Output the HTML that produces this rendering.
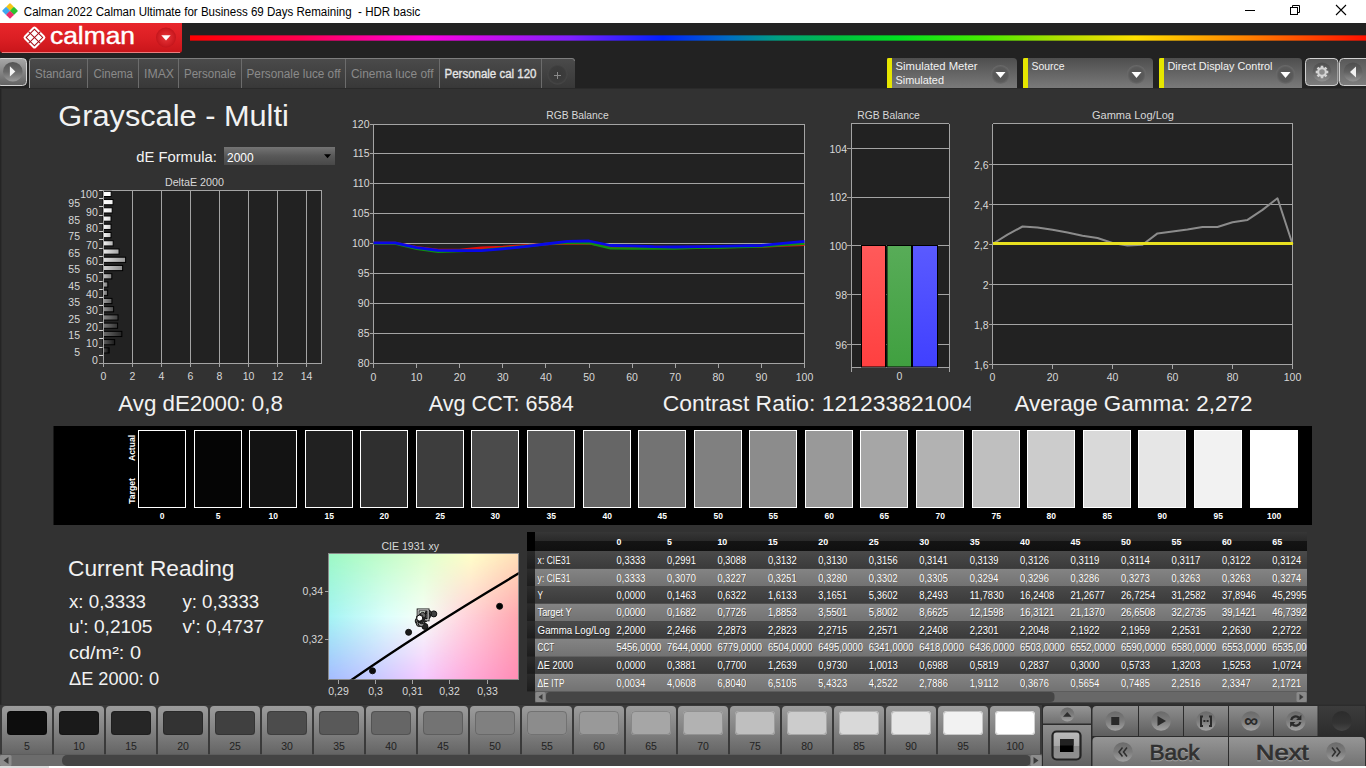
<!DOCTYPE html>
<html lang="en"><head><meta charset="utf-8"><title>Calman 2022 - HDR basic</title>
<style>
html,body{margin:0;padding:0;background:#323232;overflow:hidden;}
body{width:1366px;height:768px;}
svg{display:block;font-family:"Liberation Sans",sans-serif;}
</style></head><body>
<svg width="1366" height="768" viewBox="0 0 1366 768">
<defs>
<linearGradient id="gLogo" x1="0" y1="0" x2="0" y2="1"><stop offset="0" stop-color="#e8262b"/><stop offset="0.5" stop-color="#dc1f24"/><stop offset="1" stop-color="#c8151a"/></linearGradient>
<radialGradient id="gRedBtn" cx="0.5" cy="0.5" r="0.5"><stop offset="0" stop-color="#e8363a"/><stop offset="0.8" stop-color="#cf1c22"/><stop offset="1" stop-color="#c2151b"/></radialGradient>
<linearGradient id="gRain" x1="0" y1="0" x2="1" y2="0"><stop offset="0" stop-color="#ff0000"/><stop offset="0.094" stop-color="#ff0050"/><stop offset="0.2" stop-color="#ff00e0"/><stop offset="0.323" stop-color="#8020ff"/><stop offset="0.402" stop-color="#0020ff"/><stop offset="0.46" stop-color="#0070c0"/><stop offset="0.5" stop-color="#00a080"/><stop offset="0.553" stop-color="#00c040"/><stop offset="0.602" stop-color="#00e020"/><stop offset="0.676" stop-color="#48ec00"/><stop offset="0.74" stop-color="#b0e000"/><stop offset="0.804" stop-color="#ffe000"/><stop offset="0.9" stop-color="#ff8000"/><stop offset="1" stop-color="#ff1000"/></linearGradient>
<linearGradient id="gRainS" x1="0" y1="0" x2="0" y2="1"><stop offset="0" stop-color="#222"/><stop offset="0.25" stop-color="#222"/><stop offset="1" stop-color="#222"/></linearGradient>
<linearGradient id="gPlayB" x1="0" y1="0" x2="0" y2="1"><stop offset="0" stop-color="#a8a8a8"/><stop offset="1" stop-color="#626262"/></linearGradient>
<linearGradient id="gDarkC" x1="0" y1="0" x2="0" y2="1"><stop offset="0" stop-color="#545454"/><stop offset="0.5" stop-color="#6a6a6a"/><stop offset="1" stop-color="#9c9c9c"/></linearGradient>
<linearGradient id="gTab" x1="0" y1="0" x2="0" y2="1"><stop offset="0" stop-color="#4b4b4b"/><stop offset="1" stop-color="#383838"/></linearGradient>
<radialGradient id="gPlus" cx="0.5" cy="0.5" r="0.5"><stop offset="0" stop-color="#383838"/><stop offset="0.8" stop-color="#3c3c3c"/><stop offset="1" stop-color="#484848"/></radialGradient>
<linearGradient id="gBox" x1="0" y1="0" x2="0" y2="1"><stop offset="0" stop-color="#4e4e4e"/><stop offset="1" stop-color="#7a7a7a"/></linearGradient>
<radialGradient id="gBoxC" cx="0.5" cy="0.5" r="0.5"><stop offset="0" stop-color="#545454"/><stop offset="0.75" stop-color="#5a5a5a"/><stop offset="1" stop-color="#6c6c6c"/></radialGradient>
<linearGradient id="gGearB" x1="0" y1="0" x2="0" y2="1"><stop offset="0" stop-color="#585858"/><stop offset="1" stop-color="#7e7e7e"/></linearGradient>
<linearGradient id="gGearC" x1="0" y1="0" x2="0" y2="1"><stop offset="0" stop-color="#4e4e4e"/><stop offset="0.5" stop-color="#626262"/><stop offset="1" stop-color="#929292"/></linearGradient>
<linearGradient id="gDrop" x1="0" y1="0" x2="0" y2="1"><stop offset="0" stop-color="#747474"/><stop offset="0.5" stop-color="#585858"/><stop offset="1" stop-color="#484848"/></linearGradient>
<linearGradient id="gB100" x1="0" y1="0" x2="1" y2="0"><stop offset="0" stop-color="rgb(255,255,255)"/><stop offset="1" stop-color="rgb(255,255,255)"/></linearGradient>
<linearGradient id="gB95" x1="0" y1="0" x2="1" y2="0"><stop offset="0" stop-color="rgb(255,255,255)"/><stop offset="1" stop-color="rgb(242,242,242)"/></linearGradient>
<linearGradient id="gB90" x1="0" y1="0" x2="1" y2="0"><stop offset="0" stop-color="rgb(255,255,255)"/><stop offset="1" stop-color="rgb(230,230,230)"/></linearGradient>
<linearGradient id="gB85" x1="0" y1="0" x2="1" y2="0"><stop offset="0" stop-color="rgb(255,255,255)"/><stop offset="1" stop-color="rgb(217,217,217)"/></linearGradient>
<linearGradient id="gB80" x1="0" y1="0" x2="1" y2="0"><stop offset="0" stop-color="rgb(255,255,255)"/><stop offset="1" stop-color="rgb(204,204,204)"/></linearGradient>
<linearGradient id="gB75" x1="0" y1="0" x2="1" y2="0"><stop offset="0" stop-color="rgb(255,255,255)"/><stop offset="1" stop-color="rgb(191,191,191)"/></linearGradient>
<linearGradient id="gB70" x1="0" y1="0" x2="1" y2="0"><stop offset="0" stop-color="rgb(248,248,248)"/><stop offset="1" stop-color="rgb(178,178,178)"/></linearGradient>
<linearGradient id="gB65" x1="0" y1="0" x2="1" y2="0"><stop offset="0" stop-color="rgb(236,236,236)"/><stop offset="1" stop-color="rgb(166,166,166)"/></linearGradient>
<linearGradient id="gB60" x1="0" y1="0" x2="1" y2="0"><stop offset="0" stop-color="rgb(223,223,223)"/><stop offset="1" stop-color="rgb(153,153,153)"/></linearGradient>
<linearGradient id="gB55" x1="0" y1="0" x2="1" y2="0"><stop offset="0" stop-color="rgb(210,210,210)"/><stop offset="1" stop-color="rgb(140,140,140)"/></linearGradient>
<linearGradient id="gB50" x1="0" y1="0" x2="1" y2="0"><stop offset="0" stop-color="rgb(198,198,198)"/><stop offset="1" stop-color="rgb(128,128,128)"/></linearGradient>
<linearGradient id="gB45" x1="0" y1="0" x2="1" y2="0"><stop offset="0" stop-color="rgb(185,185,185)"/><stop offset="1" stop-color="rgb(115,115,115)"/></linearGradient>
<linearGradient id="gB40" x1="0" y1="0" x2="1" y2="0"><stop offset="0" stop-color="rgb(172,172,172)"/><stop offset="1" stop-color="rgb(102,102,102)"/></linearGradient>
<linearGradient id="gB35" x1="0" y1="0" x2="1" y2="0"><stop offset="0" stop-color="rgb(159,159,159)"/><stop offset="1" stop-color="rgb(89,89,89)"/></linearGradient>
<linearGradient id="gB30" x1="0" y1="0" x2="1" y2="0"><stop offset="0" stop-color="rgb(146,146,146)"/><stop offset="1" stop-color="rgb(76,76,76)"/></linearGradient>
<linearGradient id="gB25" x1="0" y1="0" x2="1" y2="0"><stop offset="0" stop-color="rgb(134,134,134)"/><stop offset="1" stop-color="rgb(64,64,64)"/></linearGradient>
<linearGradient id="gB20" x1="0" y1="0" x2="1" y2="0"><stop offset="0" stop-color="rgb(121,121,121)"/><stop offset="1" stop-color="rgb(51,51,51)"/></linearGradient>
<linearGradient id="gB15" x1="0" y1="0" x2="1" y2="0"><stop offset="0" stop-color="rgb(108,108,108)"/><stop offset="1" stop-color="rgb(38,38,38)"/></linearGradient>
<linearGradient id="gB10" x1="0" y1="0" x2="1" y2="0"><stop offset="0" stop-color="rgb(96,96,96)"/><stop offset="1" stop-color="rgb(26,26,26)"/></linearGradient>
<linearGradient id="gB5" x1="0" y1="0" x2="1" y2="0"><stop offset="0" stop-color="rgb(83,83,83)"/><stop offset="1" stop-color="rgb(13,13,13)"/></linearGradient>
<linearGradient id="gBr" x1="0" y1="0" x2="0" y2="1"><stop offset="0" stop-color="#ff5a5a"/><stop offset="1" stop-color="#ff4040"/></linearGradient>
<linearGradient id="gBg" x1="0" y1="0" x2="0" y2="1"><stop offset="0" stop-color="#58ac58"/><stop offset="1" stop-color="#40a040"/></linearGradient>
<linearGradient id="gBb" x1="0" y1="0" x2="0" y2="1"><stop offset="0" stop-color="#5a5aff"/><stop offset="1" stop-color="#4040ff"/></linearGradient>
<linearGradient id="gCt" x1="0" y1="0" x2="1" y2="0"><stop offset="0" stop-color="#9cf8c4"/><stop offset="0.5" stop-color="#dcffcc"/><stop offset="0.75" stop-color="#ffffc8"/><stop offset="1" stop-color="#ffe0b8"/></linearGradient>
<linearGradient id="gCm" x1="0" y1="0" x2="1" y2="0"><stop offset="0" stop-color="#a4f4f4"/><stop offset="0.3" stop-color="#dcfffc"/><stop offset="0.5" stop-color="#f8fff8"/><stop offset="0.7" stop-color="#ffd8e0"/><stop offset="1" stop-color="#ffa8b0"/></linearGradient>
<linearGradient id="gCb" x1="0" y1="0" x2="1" y2="0"><stop offset="0" stop-color="#a4bcff"/><stop offset="0.25" stop-color="#c8c8ff"/><stop offset="0.5" stop-color="#f4c8ff"/><stop offset="0.75" stop-color="#ffa8d8"/><stop offset="1" stop-color="#ff8cb4"/></linearGradient>
<linearGradient id="gMt" x1="0" y1="0" x2="0" y2="1"><stop offset="0" stop-color="#fff"/><stop offset="0.5" stop-color="#000"/><stop offset="1" stop-color="#000"/></linearGradient>
<linearGradient id="gMb" x1="0" y1="0" x2="0" y2="1"><stop offset="0" stop-color="#000"/><stop offset="0.5" stop-color="#000"/><stop offset="1" stop-color="#fff"/></linearGradient>
<mask id="mTop" maskUnits="userSpaceOnUse" x="328.5" y="553.5" width="190.0" height="126.0"><rect x="328.5" y="553.5" width="190.0" height="126.0" fill="url(#gMt)"/></mask>
<mask id="mBot" maskUnits="userSpaceOnUse" x="328.5" y="553.5" width="190.0" height="126.0"><rect x="328.5" y="553.5" width="190.0" height="126.0" fill="url(#gMb)"/></mask>
<linearGradient id="gTh" x1="0" y1="0" x2="0" y2="1"><stop offset="0" stop-color="#363636"/><stop offset="0.45" stop-color="#2a2a2a"/><stop offset="0.5" stop-color="#141414"/><stop offset="1" stop-color="#101010"/></linearGradient>
<linearGradient id="gTd" x1="0" y1="0" x2="0" y2="1"><stop offset="0" stop-color="#4a4a4a"/><stop offset="1" stop-color="#3a3a3a"/></linearGradient>
<linearGradient id="gTl" x1="0" y1="0" x2="0" y2="1"><stop offset="0" stop-color="#848484"/><stop offset="1" stop-color="#727272"/></linearGradient>
<linearGradient id="gTs" x1="0" y1="0" x2="0" y2="1"><stop offset="0" stop-color="#2a2a2a"/><stop offset="1" stop-color="#1c1c1c"/></linearGradient>
<linearGradient id="gSw" x1="0" y1="0" x2="0" y2="1"><stop offset="0" stop-color="#9c9c9c"/><stop offset="0.5" stop-color="#828282"/><stop offset="1" stop-color="#646464"/></linearGradient>
<linearGradient id="gBt" x1="0" y1="0" x2="0" y2="1"><stop offset="0" stop-color="#8e8e8e"/><stop offset="1" stop-color="#5e5e5e"/></linearGradient>
<linearGradient id="gBt2" x1="0" y1="0" x2="0" y2="1"><stop offset="0" stop-color="#969696"/><stop offset="1" stop-color="#707070"/></linearGradient>
<linearGradient id="gCtl" x1="0" y1="0" x2="0" y2="1"><stop offset="0" stop-color="#6a6a6a"/><stop offset="0.5" stop-color="#7c7c7c"/><stop offset="1" stop-color="#a2a2a2"/></linearGradient>
<linearGradient id="gGloss" x1="0" y1="0" x2="0" y2="1"><stop offset="0" stop-color="#bcbcbc"/><stop offset="0.5" stop-color="#a8a8a8"/><stop offset="0.5" stop-color="#8a8a8a"/><stop offset="1" stop-color="#909090"/></linearGradient>
<linearGradient id="gLedBg" x1="0" y1="0" x2="0" y2="1"><stop offset="0" stop-color="#3c3c3c"/><stop offset="1" stop-color="#2c2c2c"/></linearGradient>
<linearGradient id="gLed" x1="0" y1="0" x2="0" y2="1"><stop offset="0" stop-color="#2c2c2c"/><stop offset="0.6" stop-color="#333"/><stop offset="1" stop-color="#464646"/></linearGradient>
</defs>
<rect x="0" y="0" width="1366" height="768" fill="#323232" />
<rect x="0" y="0" width="1366" height="23" fill="#ffffff" />
<rect x="0" y="88" width="1.3" height="617" fill="#242424" />
<g transform="translate(10,10.9)"><rect x="-2.9" y="-2.9" width="5.8" height="5.8" rx="0.8" fill="#f5c518" transform="translate(0,-3.9) rotate(45)"/><rect x="-2.9" y="-2.9" width="5.8" height="5.8" rx="0.8" fill="#3fa9f0" transform="translate(-3.9,0) rotate(45)"/><rect x="-2.9" y="-2.9" width="5.8" height="5.8" rx="0.8" fill="#2fc22f" transform="translate(3.9,0) rotate(45)"/><rect x="-2.9" y="-2.9" width="5.8" height="5.8" rx="0.8" fill="#ea2f6c" transform="translate(0,3.9) rotate(45)"/></g>
<text x="23.8" y="15.8" font-size="12.5" fill="#000" textLength="396.5" lengthAdjust="spacingAndGlyphs" xml:space="preserve">Calman 2022 Calman Ultimate for Business 69 Days Remaining  - HDR basic</text>
<line x1="1245" y1="10.5" x2="1255" y2="10.5" stroke="#000" stroke-width="1"  shape-rendering="crispEdges"/>
<rect x="1290.5" y="7.5" width="7" height="7" fill="none" stroke="#000" stroke-width="1"/>
<path d="M1292.5 7.5 V5.5 H1299.5 V12.5 H1297.5" fill="none" stroke="#000" stroke-width="1"/>
<path d="M1336 5 L1346 15 M1346 5 L1336 15" stroke="#000" stroke-width="1.1" fill="none"/>
<rect x="0" y="23" width="1366" height="65" fill="#222222" />
<path d="M0 23 H182 V50 Q182 53 179 53 H3 Q0 53 0 50 Z" fill="url(#gLogo)"/>
<path d="M2 52.5 H180" stroke="#f09090" stroke-width="1" opacity="0.85"/>
<g transform="translate(34.45,37.5) rotate(45)"><rect x="-8.4" y="-8.4" width="16.8" height="16.8" rx="2.4" fill="#fff"/><rect x="-5.85" y="-5.85" width="11.7" height="11.7" fill="none" stroke="#a80f18" stroke-width="1"/><line x1="0" y1="-8.4" x2="0" y2="8.4" stroke="#a80f18" stroke-width="1"/><line x1="-8.4" y1="0" x2="8.4" y2="0" stroke="#a80f18" stroke-width="1"/></g>
<text x="50" y="44.2" font-size="23" fill="#ffffff" textLength="85" lengthAdjust="spacingAndGlyphs" stroke="#fff" stroke-width="0.4">calman</text>
<circle cx="166" cy="37.5" r="10" fill="url(#gRedBtn)"/>
<path d="M161.3 35.2 H170.7 L166 40.6 Z" fill="#fff"/>
<rect x="190" y="35" width="1176" height="6" fill="url(#gRain)" />
<rect x="190" y="35" width="1176" height="1" fill="#222" opacity="0.35"/>
<rect x="190" y="40" width="1176" height="1" fill="#222" opacity="0.35"/>
<rect x="-3" y="58.5" width="29.5" height="27" fill="url(#gPlayB)" rx="4" stroke="#d4d4d4" stroke-width="1" />
<circle cx="12.8" cy="71.8" r="9.8" fill="url(#gDarkC)"/>
<path d="M9.9 66.3 L15.3 71.4 L9.9 76.5 Z" fill="#f4f4f4"/>
<path d="M29 88 V61 Q29 58 32 58 H572 Q575 58 575 61 V88 Z" fill="url(#gTab)"/>
<path d="M29.5 88 V61 Q29.5 58.5 32 58.5 H572 Q574.5 58.5 574.5 61" fill="none" stroke="#7d7d7d" stroke-width="1"/>
<line x1="29.5" y1="61" x2="29.5" y2="88" stroke="#a0a0a0" stroke-width="1"  shape-rendering="crispEdges"/>
<line x1="87.5" y1="59" x2="87.5" y2="88" stroke="#6c6c6c" stroke-width="1"  shape-rendering="crispEdges"/>
<line x1="138.5" y1="59" x2="138.5" y2="88" stroke="#6c6c6c" stroke-width="1"  shape-rendering="crispEdges"/>
<line x1="178.5" y1="59" x2="178.5" y2="88" stroke="#6c6c6c" stroke-width="1"  shape-rendering="crispEdges"/>
<line x1="241.5" y1="59" x2="241.5" y2="88" stroke="#6c6c6c" stroke-width="1"  shape-rendering="crispEdges"/>
<line x1="345.5" y1="59" x2="345.5" y2="88" stroke="#6c6c6c" stroke-width="1"  shape-rendering="crispEdges"/>
<line x1="439.5" y1="59" x2="439.5" y2="88" stroke="#6c6c6c" stroke-width="1"  shape-rendering="crispEdges"/>
<line x1="541.5" y1="59" x2="541.5" y2="88" stroke="#6c6c6c" stroke-width="1"  shape-rendering="crispEdges"/>
<text x="35" y="77.8" font-size="12.5" fill="#8c8c8c" textLength="46.8" lengthAdjust="spacingAndGlyphs" >Standard</text>
<text x="93.5" y="77.8" font-size="12.5" fill="#8a8a8a" textLength="39.5" lengthAdjust="spacingAndGlyphs" >Cinema</text>
<text x="144" y="77.8" font-size="12.5" fill="#8a8a8a" textLength="30" lengthAdjust="spacingAndGlyphs" >IMAX</text>
<text x="184" y="77.8" font-size="12.5" fill="#8a8a8a" textLength="52" lengthAdjust="spacingAndGlyphs" >Personale</text>
<text x="246.5" y="77.8" font-size="12.5" fill="#8a8a8a" textLength="94.0" lengthAdjust="spacingAndGlyphs" >Personale luce off</text>
<text x="351" y="77.8" font-size="12.5" fill="#8a8a8a" textLength="82.5" lengthAdjust="spacingAndGlyphs" >Cinema luce off</text>
<text x="444.5" y="77.8" font-size="12.5" fill="#e6e6e6" textLength="92.0" lengthAdjust="spacingAndGlyphs" stroke="#e6e6e6" stroke-width="0.35">Personale cal 120</text>
<circle cx="557.5" cy="74.5" r="10" fill="url(#gPlus)"/>
<path d="M554 75.5 H561 M557.5 72 V79" stroke="#8a8a8a" stroke-width="1"/>
<line x1="0" y1="88.5" x2="1366" y2="88.5" stroke="#2a2a2a" stroke-width="1"  shape-rendering="crispEdges"/>
<path d="M887 88 V58 H1013 Q1017 58 1017 62 V88 Z" fill="url(#gBox)"/>
<path d="M887 88 V59.5 Q887 58 888.5 58 H892 V88 Z" fill="#e6e600"/>
<text x="895.5" y="70.3" font-size="11.5" fill="#f2f2f2" textLength="82" lengthAdjust="spacingAndGlyphs" >Simulated Meter</text>
<text x="895.5" y="84.2" font-size="11.5" fill="#f2f2f2" textLength="48.5" lengthAdjust="spacingAndGlyphs" >Simulated</text>
<circle cx="1000.5" cy="74.5" r="9.5" fill="url(#gBoxC)"/>
<path d="M995.5 72 H1005.5 L1000.5 78 Z" fill="#fff"/>
<path d="M1023 88 V58 H1149 Q1153 58 1153 62 V88 Z" fill="url(#gBox)"/>
<path d="M1023 88 V59.5 Q1023 58 1024.5 58 H1028 V88 Z" fill="#e6e600"/>
<text x="1031.5" y="70.3" font-size="11.5" fill="#f2f2f2" textLength="33" lengthAdjust="spacingAndGlyphs" >Source</text>
<circle cx="1136.5" cy="74.5" r="9.5" fill="url(#gBoxC)"/>
<path d="M1131.5 72 H1141.5 L1136.5 78 Z" fill="#fff"/>
<path d="M1159 88 V58 H1298 Q1302 58 1302 62 V88 Z" fill="url(#gBox)"/>
<path d="M1159 88 V59.5 Q1159 58 1160.5 58 H1164 V88 Z" fill="#e6e600"/>
<text x="1167.5" y="70.3" font-size="11.5" fill="#f2f2f2" textLength="105" lengthAdjust="spacingAndGlyphs" >Direct Display Control</text>
<circle cx="1285.5" cy="74.5" r="9.5" fill="url(#gBoxC)"/>
<path d="M1280.5 72 H1290.5 L1285.5 78 Z" fill="#fff"/>
<rect x="1305.5" y="58.5" width="32.5" height="27" fill="url(#gGearB)" rx="4" stroke="#d0d0d0" stroke-width="1" />
<rect x="1339.5" y="58.5" width="32" height="27" fill="url(#gGearB)" rx="4" stroke="#d0d0d0" stroke-width="1" />
<circle cx="1322" cy="72" r="9.5" fill="url(#gGearC)"/>
<circle cx="1353" cy="72" r="9.5" fill="url(#gGearC)"/>
<g transform="translate(1322,72)"><rect x="-1.3" y="-6.3" width="2.6" height="3" fill="#d4d4d4" transform="rotate(0)"/><rect x="-1.3" y="-6.3" width="2.6" height="3" fill="#d4d4d4" transform="rotate(45)"/><rect x="-1.3" y="-6.3" width="2.6" height="3" fill="#d4d4d4" transform="rotate(90)"/><rect x="-1.3" y="-6.3" width="2.6" height="3" fill="#d4d4d4" transform="rotate(135)"/><rect x="-1.3" y="-6.3" width="2.6" height="3" fill="#d4d4d4" transform="rotate(180)"/><rect x="-1.3" y="-6.3" width="2.6" height="3" fill="#d4d4d4" transform="rotate(225)"/><rect x="-1.3" y="-6.3" width="2.6" height="3" fill="#d4d4d4" transform="rotate(270)"/><rect x="-1.3" y="-6.3" width="2.6" height="3" fill="#d4d4d4" transform="rotate(315)"/><circle r="3.8" fill="#8c8c8c" stroke="#d4d4d4" stroke-width="2"/></g>
<path d="M1356 66.5 L1350 72 L1356 77.5 Z" fill="#f0f0f0"/>
<text x="58.3" y="126" font-size="29" fill="#f2f2f2" textLength="230.5" lengthAdjust="spacingAndGlyphs" >Grayscale - Multi</text>
<text x="136.2" y="162" font-size="15.5" fill="#f2f2f2" textLength="80.6" lengthAdjust="spacingAndGlyphs" >dE Formula:</text>
<rect x="224" y="147" width="111" height="18" fill="url(#gDrop)" />
<text x="227" y="161.8" font-size="12" fill="#ffffff" textLength="26.6" lengthAdjust="spacingAndGlyphs" >2000</text>
<path d="M324 154.3 H331 L327.5 158.2 Z" fill="#000"/>
<text x="194.4" y="185.5" font-size="10.5" fill="#d8d8d8" text-anchor="middle" textLength="59" lengthAdjust="spacingAndGlyphs" >DeltaE 2000</text>
<rect x="103.5" y="190" width="218.0" height="173" fill="#222222" />
<line x1="103.5" y1="190" x2="103.5" y2="367" stroke="#a4a4a4" stroke-width="1"  shape-rendering="crispEdges"/>
<text x="103.5" y="379.8" font-size="10.5" fill="#d8d8d8" text-anchor="middle" >0</text>
<line x1="132.5" y1="190" x2="132.5" y2="367" stroke="#a4a4a4" stroke-width="1"  shape-rendering="crispEdges"/>
<text x="132.5" y="379.8" font-size="10.5" fill="#d8d8d8" text-anchor="middle" >2</text>
<line x1="161.5" y1="190" x2="161.5" y2="367" stroke="#a4a4a4" stroke-width="1"  shape-rendering="crispEdges"/>
<text x="161.5" y="379.8" font-size="10.5" fill="#d8d8d8" text-anchor="middle" >4</text>
<line x1="190.5" y1="190" x2="190.5" y2="367" stroke="#a4a4a4" stroke-width="1"  shape-rendering="crispEdges"/>
<text x="190.5" y="379.8" font-size="10.5" fill="#d8d8d8" text-anchor="middle" >6</text>
<line x1="219.5" y1="190" x2="219.5" y2="367" stroke="#a4a4a4" stroke-width="1"  shape-rendering="crispEdges"/>
<text x="219.5" y="379.8" font-size="10.5" fill="#d8d8d8" text-anchor="middle" >8</text>
<line x1="248.5" y1="190" x2="248.5" y2="367" stroke="#a4a4a4" stroke-width="1"  shape-rendering="crispEdges"/>
<text x="248.5" y="379.8" font-size="10.5" fill="#d8d8d8" text-anchor="middle" >10</text>
<line x1="277.5" y1="190" x2="277.5" y2="367" stroke="#a4a4a4" stroke-width="1"  shape-rendering="crispEdges"/>
<text x="277.5" y="379.8" font-size="10.5" fill="#d8d8d8" text-anchor="middle" >12</text>
<line x1="306.5" y1="190" x2="306.5" y2="367" stroke="#a4a4a4" stroke-width="1"  shape-rendering="crispEdges"/>
<text x="306.5" y="379.8" font-size="10.5" fill="#d8d8d8" text-anchor="middle" >14</text>
<line x1="103.5" y1="190" x2="321.5" y2="190" stroke="#a4a4a4" stroke-width="1"  shape-rendering="crispEdges"/>
<line x1="321.5" y1="190" x2="321.5" y2="363" stroke="#a4a4a4" stroke-width="1"  shape-rendering="crispEdges"/>
<line x1="98.5" y1="363" x2="321.5" y2="363" stroke="#a4a4a4" stroke-width="1"  shape-rendering="crispEdges"/>
<line x1="98.5" y1="190.5" x2="103.5" y2="190.5" stroke="#d4d4d4" stroke-width="1"  shape-rendering="crispEdges"/>
<text x="97.8" y="198.2" font-size="10.5" fill="#d8d8d8" text-anchor="end" >100</text>
<rect x="103.0" y="191.30" width="8.19" height="5.2" fill="url(#gB100)" stroke="#000" stroke-width="1"/>
<line x1="98.5" y1="198.5" x2="103.5" y2="198.5" stroke="#d4d4d4" stroke-width="1"  shape-rendering="crispEdges"/>
<text x="80" y="207.3" font-size="10.5" fill="#d8d8d8" text-anchor="end" >95</text>
<rect x="103.0" y="199.54" width="10.07" height="5.2" fill="url(#gB95)" stroke="#000" stroke-width="1"/>
<line x1="98.5" y1="206.5" x2="103.5" y2="206.5" stroke="#d4d4d4" stroke-width="1"  shape-rendering="crispEdges"/>
<text x="97.8" y="215.6" font-size="10.5" fill="#d8d8d8" text-anchor="end" >90</text>
<rect x="103.0" y="207.78" width="9.20" height="5.2" fill="url(#gB90)" stroke="#000" stroke-width="1"/>
<line x1="98.5" y1="215.5" x2="103.5" y2="215.5" stroke="#d4d4d4" stroke-width="1"  shape-rendering="crispEdges"/>
<text x="80" y="223.8" font-size="10.5" fill="#d8d8d8" text-anchor="end" >85</text>
<rect x="103.0" y="216.01" width="8.04" height="5.2" fill="url(#gB85)" stroke="#000" stroke-width="1"/>
<line x1="98.5" y1="223.5" x2="103.5" y2="223.5" stroke="#d4d4d4" stroke-width="1"  shape-rendering="crispEdges"/>
<text x="97.8" y="232.1" font-size="10.5" fill="#d8d8d8" text-anchor="end" >80</text>
<rect x="103.0" y="224.25" width="8.04" height="5.2" fill="url(#gB80)" stroke="#000" stroke-width="1"/>
<line x1="98.5" y1="231.5" x2="103.5" y2="231.5" stroke="#d4d4d4" stroke-width="1"  shape-rendering="crispEdges"/>
<text x="80" y="240.3" font-size="10.5" fill="#d8d8d8" text-anchor="end" >75</text>
<rect x="103.0" y="232.49" width="8.04" height="5.2" fill="url(#gB75)" stroke="#000" stroke-width="1"/>
<line x1="98.5" y1="239.5" x2="103.5" y2="239.5" stroke="#d4d4d4" stroke-width="1"  shape-rendering="crispEdges"/>
<text x="97.8" y="248.5" font-size="10.5" fill="#d8d8d8" text-anchor="end" >70</text>
<rect x="103.0" y="240.73" width="10.21" height="5.2" fill="url(#gB70)" stroke="#000" stroke-width="1"/>
<line x1="98.5" y1="248.5" x2="103.5" y2="248.5" stroke="#d4d4d4" stroke-width="1"  shape-rendering="crispEdges"/>
<text x="80" y="256.8" font-size="10.5" fill="#d8d8d8" text-anchor="end" >65</text>
<rect x="103.0" y="248.97" width="16.05" height="5.2" fill="url(#gB65)" stroke="#000" stroke-width="1"/>
<line x1="98.5" y1="256.5" x2="103.5" y2="256.5" stroke="#d4d4d4" stroke-width="1"  shape-rendering="crispEdges"/>
<text x="97.8" y="265.0" font-size="10.5" fill="#d8d8d8" text-anchor="end" >60</text>
<rect x="103.0" y="257.20" width="22.62" height="5.2" fill="url(#gB60)" stroke="#000" stroke-width="1"/>
<line x1="98.5" y1="264.5" x2="103.5" y2="264.5" stroke="#d4d4d4" stroke-width="1"  shape-rendering="crispEdges"/>
<text x="80" y="273.2" font-size="10.5" fill="#d8d8d8" text-anchor="end" >55</text>
<rect x="103.0" y="265.44" width="19.64" height="5.2" fill="url(#gB55)" stroke="#000" stroke-width="1"/>
<line x1="98.5" y1="272.5" x2="103.5" y2="272.5" stroke="#d4d4d4" stroke-width="1"  shape-rendering="crispEdges"/>
<text x="97.8" y="281.5" font-size="10.5" fill="#d8d8d8" text-anchor="end" >50</text>
<rect x="103.0" y="273.68" width="8.81" height="5.2" fill="url(#gB50)" stroke="#000" stroke-width="1"/>
<line x1="98.5" y1="281.5" x2="103.5" y2="281.5" stroke="#d4d4d4" stroke-width="1"  shape-rendering="crispEdges"/>
<text x="80" y="289.7" font-size="10.5" fill="#d8d8d8" text-anchor="end" >45</text>
<rect x="103.0" y="281.92" width="4.85" height="5.2" fill="url(#gB45)" stroke="#000" stroke-width="1"/>
<line x1="98.5" y1="289.5" x2="103.5" y2="289.5" stroke="#d4d4d4" stroke-width="1"  shape-rendering="crispEdges"/>
<text x="97.8" y="298.0" font-size="10.5" fill="#d8d8d8" text-anchor="end" >40</text>
<rect x="103.0" y="290.16" width="4.61" height="5.2" fill="url(#gB40)" stroke="#000" stroke-width="1"/>
<line x1="98.5" y1="297.5" x2="103.5" y2="297.5" stroke="#d4d4d4" stroke-width="1"  shape-rendering="crispEdges"/>
<text x="80" y="306.2" font-size="10.5" fill="#d8d8d8" text-anchor="end" >35</text>
<rect x="103.0" y="298.40" width="8.94" height="5.2" fill="url(#gB35)" stroke="#000" stroke-width="1"/>
<line x1="98.5" y1="305.5" x2="103.5" y2="305.5" stroke="#d4d4d4" stroke-width="1"  shape-rendering="crispEdges"/>
<text x="97.8" y="314.4" font-size="10.5" fill="#d8d8d8" text-anchor="end" >30</text>
<rect x="103.0" y="306.63" width="10.63" height="5.2" fill="url(#gB30)" stroke="#000" stroke-width="1"/>
<line x1="98.5" y1="314.5" x2="103.5" y2="314.5" stroke="#d4d4d4" stroke-width="1"  shape-rendering="crispEdges"/>
<text x="80" y="322.7" font-size="10.5" fill="#d8d8d8" text-anchor="end" >25</text>
<rect x="103.0" y="314.87" width="15.02" height="5.2" fill="url(#gB25)" stroke="#000" stroke-width="1"/>
<line x1="98.5" y1="322.5" x2="103.5" y2="322.5" stroke="#d4d4d4" stroke-width="1"  shape-rendering="crispEdges"/>
<text x="97.8" y="330.9" font-size="10.5" fill="#d8d8d8" text-anchor="end" >20</text>
<rect x="103.0" y="323.11" width="14.61" height="5.2" fill="url(#gB20)" stroke="#000" stroke-width="1"/>
<line x1="98.5" y1="330.5" x2="103.5" y2="330.5" stroke="#d4d4d4" stroke-width="1"  shape-rendering="crispEdges"/>
<text x="80" y="339.1" font-size="10.5" fill="#d8d8d8" text-anchor="end" >15</text>
<rect x="103.0" y="331.35" width="18.83" height="5.2" fill="url(#gB15)" stroke="#000" stroke-width="1"/>
<line x1="98.5" y1="338.5" x2="103.5" y2="338.5" stroke="#d4d4d4" stroke-width="1"  shape-rendering="crispEdges"/>
<text x="97.8" y="347.4" font-size="10.5" fill="#d8d8d8" text-anchor="end" >10</text>
<rect x="103.0" y="339.59" width="11.67" height="5.2" fill="url(#gB10)" stroke="#000" stroke-width="1"/>
<line x1="98.5" y1="347.5" x2="103.5" y2="347.5" stroke="#d4d4d4" stroke-width="1"  shape-rendering="crispEdges"/>
<text x="80" y="355.6" font-size="10.5" fill="#d8d8d8" text-anchor="end" >5</text>
<rect x="103.0" y="347.82" width="6.13" height="5.2" fill="url(#gB5)" stroke="#000" stroke-width="1"/>
<line x1="98.5" y1="355.5" x2="103.5" y2="355.5" stroke="#d4d4d4" stroke-width="1"  shape-rendering="crispEdges"/>
<text x="97.8" y="363.9" font-size="10.5" fill="#d8d8d8" text-anchor="end" >0</text>
<line x1="103.5" y1="190" x2="103.5" y2="363" stroke="#a4a4a4" stroke-width="1"  shape-rendering="crispEdges"/>
<text x="577.5" y="119" font-size="10.5" fill="#d8d8d8" text-anchor="middle" textLength="62.5" lengthAdjust="spacingAndGlyphs" >RGB Balance</text>
<rect x="373.5" y="124.5" width="431.0" height="239.0" fill="#222222" />
<line x1="369.5" y1="124.5" x2="804.5" y2="124.5" stroke="#a4a4a4" stroke-width="1"  shape-rendering="crispEdges"/>
<text x="369.5" y="128.3" font-size="10.5" fill="#d8d8d8" text-anchor="end" >120</text>
<line x1="369.5" y1="153.5" x2="804.5" y2="153.5" stroke="#a4a4a4" stroke-width="1"  shape-rendering="crispEdges"/>
<text x="369.5" y="157.3" font-size="10.5" fill="#d8d8d8" text-anchor="end" >115</text>
<line x1="369.5" y1="183.5" x2="804.5" y2="183.5" stroke="#a4a4a4" stroke-width="1"  shape-rendering="crispEdges"/>
<text x="369.5" y="187.3" font-size="10.5" fill="#d8d8d8" text-anchor="end" >110</text>
<line x1="369.5" y1="213.5" x2="804.5" y2="213.5" stroke="#a4a4a4" stroke-width="1"  shape-rendering="crispEdges"/>
<text x="369.5" y="217.3" font-size="10.5" fill="#d8d8d8" text-anchor="end" >105</text>
<line x1="369.5" y1="243.5" x2="804.5" y2="243.5" stroke="#a4a4a4" stroke-width="1"  shape-rendering="crispEdges"/>
<text x="369.5" y="247.3" font-size="10.5" fill="#d8d8d8" text-anchor="end" >100</text>
<line x1="369.5" y1="273.5" x2="804.5" y2="273.5" stroke="#a4a4a4" stroke-width="1"  shape-rendering="crispEdges"/>
<text x="369.5" y="277.3" font-size="10.5" fill="#d8d8d8" text-anchor="end" >95</text>
<line x1="369.5" y1="303.5" x2="804.5" y2="303.5" stroke="#a4a4a4" stroke-width="1"  shape-rendering="crispEdges"/>
<text x="369.5" y="307.3" font-size="10.5" fill="#d8d8d8" text-anchor="end" >90</text>
<line x1="369.5" y1="333.5" x2="804.5" y2="333.5" stroke="#a4a4a4" stroke-width="1"  shape-rendering="crispEdges"/>
<text x="369.5" y="337.3" font-size="10.5" fill="#d8d8d8" text-anchor="end" >85</text>
<line x1="369.5" y1="363.5" x2="804.5" y2="363.5" stroke="#a4a4a4" stroke-width="1"  shape-rendering="crispEdges"/>
<text x="369.5" y="367.3" font-size="10.5" fill="#d8d8d8" text-anchor="end" >80</text>
<line x1="373.5" y1="363.5" x2="373.5" y2="367.5" stroke="#a4a4a4" stroke-width="1"  shape-rendering="crispEdges"/>
<text x="373.5" y="381" font-size="10.5" fill="#d8d8d8" text-anchor="middle" >0</text>
<line x1="416.6" y1="363.5" x2="416.6" y2="367.5" stroke="#a4a4a4" stroke-width="1"  shape-rendering="crispEdges"/>
<text x="416.6" y="381" font-size="10.5" fill="#d8d8d8" text-anchor="middle" >10</text>
<line x1="459.7" y1="363.5" x2="459.7" y2="367.5" stroke="#a4a4a4" stroke-width="1"  shape-rendering="crispEdges"/>
<text x="459.7" y="381" font-size="10.5" fill="#d8d8d8" text-anchor="middle" >20</text>
<line x1="502.79999999999995" y1="363.5" x2="502.79999999999995" y2="367.5" stroke="#a4a4a4" stroke-width="1"  shape-rendering="crispEdges"/>
<text x="502.79999999999995" y="381" font-size="10.5" fill="#d8d8d8" text-anchor="middle" >30</text>
<line x1="545.9" y1="363.5" x2="545.9" y2="367.5" stroke="#a4a4a4" stroke-width="1"  shape-rendering="crispEdges"/>
<text x="545.9" y="381" font-size="10.5" fill="#d8d8d8" text-anchor="middle" >40</text>
<line x1="589.0" y1="363.5" x2="589.0" y2="367.5" stroke="#a4a4a4" stroke-width="1"  shape-rendering="crispEdges"/>
<text x="589.0" y="381" font-size="10.5" fill="#d8d8d8" text-anchor="middle" >50</text>
<line x1="632.0999999999999" y1="363.5" x2="632.0999999999999" y2="367.5" stroke="#a4a4a4" stroke-width="1"  shape-rendering="crispEdges"/>
<text x="632.0999999999999" y="381" font-size="10.5" fill="#d8d8d8" text-anchor="middle" >60</text>
<line x1="675.2" y1="363.5" x2="675.2" y2="367.5" stroke="#a4a4a4" stroke-width="1"  shape-rendering="crispEdges"/>
<text x="675.2" y="381" font-size="10.5" fill="#d8d8d8" text-anchor="middle" >70</text>
<line x1="718.3" y1="363.5" x2="718.3" y2="367.5" stroke="#a4a4a4" stroke-width="1"  shape-rendering="crispEdges"/>
<text x="718.3" y="381" font-size="10.5" fill="#d8d8d8" text-anchor="middle" >80</text>
<line x1="761.4" y1="363.5" x2="761.4" y2="367.5" stroke="#a4a4a4" stroke-width="1"  shape-rendering="crispEdges"/>
<text x="761.4" y="381" font-size="10.5" fill="#d8d8d8" text-anchor="middle" >90</text>
<line x1="804.5" y1="363.5" x2="804.5" y2="367.5" stroke="#a4a4a4" stroke-width="1"  shape-rendering="crispEdges"/>
<text x="804.5" y="381" font-size="10.5" fill="#d8d8d8" text-anchor="middle" >100</text>
<line x1="373.5" y1="124.5" x2="373.5" y2="363.5" stroke="#a4a4a4" stroke-width="1"  shape-rendering="crispEdges"/>
<line x1="804.5" y1="124.5" x2="804.5" y2="363.5" stroke="#a4a4a4" stroke-width="1"  shape-rendering="crispEdges"/>
<polyline points="373.5,243.1 395.1,243.1 416.6,247.3 438.1,250.0 459.7,250.0 481.2,247.9 502.8,247.0 524.4,245.5 545.9,244.0 567.5,243.4 589.0,243.1 610.5,246.7 632.1,246.7 653.6,247.0 675.2,247.3 696.8,247.0 718.3,247.0 739.8,246.7 761.4,246.4 783.0,245.5 804.5,244.6" fill="none" stroke="#e01010" stroke-width="2.6" stroke-linejoin="round"/>
<polyline points="373.5,243.4 395.1,243.4 416.6,248.8 438.1,251.8 459.7,250.9 481.2,250.3 502.8,248.2 524.4,246.4 545.9,244.0 567.5,242.8 589.0,243.1 610.5,248.2 632.1,248.5 653.6,248.2 675.2,248.5 696.8,247.6 718.3,247.6 739.8,247.0 761.4,246.4 783.0,244.9 804.5,243.7" fill="none" stroke="#109010" stroke-width="2.6" stroke-linejoin="round"/>
<polyline points="373.5,242.8 395.1,242.8 416.6,247.6 438.1,250.3 459.7,250.6 481.2,250.6 502.8,248.8 524.4,246.7 545.9,244.0 567.5,241.3 589.0,241.0 610.5,245.5 632.1,245.8 653.6,246.7 675.2,247.0 696.8,246.7 718.3,246.4 739.8,245.8 761.4,245.5 783.0,243.4 804.5,241.3" fill="none" stroke="#0808e8" stroke-width="2.8" stroke-linejoin="round"/>
<text x="888.6" y="119" font-size="10.5" fill="#d8d8d8" text-anchor="middle" textLength="62.5" lengthAdjust="spacingAndGlyphs" >RGB Balance</text>
<rect x="851" y="123.5" width="98" height="244.0" fill="#222222" />
<line x1="847" y1="148.5" x2="949" y2="148.5" stroke="#a4a4a4" stroke-width="1"  shape-rendering="crispEdges"/>
<text x="847" y="152.7" font-size="10.5" fill="#d8d8d8" text-anchor="end" >104</text>
<line x1="847" y1="197" x2="949" y2="197" stroke="#a4a4a4" stroke-width="1"  shape-rendering="crispEdges"/>
<text x="847" y="201.2" font-size="10.5" fill="#d8d8d8" text-anchor="end" >102</text>
<line x1="847" y1="245.5" x2="949" y2="245.5" stroke="#a4a4a4" stroke-width="1"  shape-rendering="crispEdges"/>
<text x="847" y="249.7" font-size="10.5" fill="#d8d8d8" text-anchor="end" >100</text>
<line x1="847" y1="294.5" x2="949" y2="294.5" stroke="#a4a4a4" stroke-width="1"  shape-rendering="crispEdges"/>
<text x="847" y="298.7" font-size="10.5" fill="#d8d8d8" text-anchor="end" >98</text>
<line x1="847" y1="344.5" x2="949" y2="344.5" stroke="#a4a4a4" stroke-width="1"  shape-rendering="crispEdges"/>
<text x="847" y="348.7" font-size="10.5" fill="#d8d8d8" text-anchor="end" >96</text>
<line x1="851" y1="123.5" x2="851" y2="371.5" stroke="#a4a4a4" stroke-width="1"  shape-rendering="crispEdges"/>
<line x1="949" y1="123.5" x2="949" y2="371.5" stroke="#a4a4a4" stroke-width="1"  shape-rendering="crispEdges"/>
<line x1="851" y1="123.5" x2="949" y2="123.5" stroke="#a4a4a4" stroke-width="1"  shape-rendering="crispEdges"/>
<line x1="851" y1="367.5" x2="949" y2="367.5" stroke="#a4a4a4" stroke-width="1"  shape-rendering="crispEdges"/>
<rect x="861.5" y="245.5" width="24.0" height="121.5" fill="url(#gBr)" stroke="#000" stroke-width="1"/>
<rect x="887" y="245.5" width="24.5" height="121.5" fill="url(#gBg)" stroke="#000" stroke-width="1"/>
<rect x="912.5" y="245.5" width="25.0" height="121.5" fill="url(#gBb)" stroke="#000" stroke-width="1"/>
<text x="899.5" y="379.8" font-size="10.5" fill="#d8d8d8" text-anchor="middle" >0</text>
<text x="1133" y="119.3" font-size="10.5" fill="#d8d8d8" text-anchor="middle" textLength="82" lengthAdjust="spacingAndGlyphs" >Gamma Log/Log</text>
<rect x="992.5" y="123.5" width="300.0" height="241.0" fill="#222222" />
<line x1="988.5" y1="164.5" x2="1292.5" y2="164.5" stroke="#a4a4a4" stroke-width="1"  shape-rendering="crispEdges"/>
<text x="988.5" y="168.7" font-size="10.5" fill="#d8d8d8" text-anchor="end" >2,6</text>
<line x1="988.5" y1="204.5" x2="1292.5" y2="204.5" stroke="#a4a4a4" stroke-width="1"  shape-rendering="crispEdges"/>
<text x="988.5" y="208.7" font-size="10.5" fill="#d8d8d8" text-anchor="end" >2,4</text>
<line x1="988.5" y1="244.5" x2="1292.5" y2="244.5" stroke="#a4a4a4" stroke-width="1"  shape-rendering="crispEdges"/>
<text x="988.5" y="248.7" font-size="10.5" fill="#d8d8d8" text-anchor="end" >2,2</text>
<line x1="988.5" y1="284.5" x2="1292.5" y2="284.5" stroke="#a4a4a4" stroke-width="1"  shape-rendering="crispEdges"/>
<text x="988.5" y="288.7" font-size="10.5" fill="#d8d8d8" text-anchor="end" >2</text>
<line x1="988.5" y1="324.5" x2="1292.5" y2="324.5" stroke="#a4a4a4" stroke-width="1"  shape-rendering="crispEdges"/>
<text x="988.5" y="328.7" font-size="10.5" fill="#d8d8d8" text-anchor="end" >1,8</text>
<line x1="988.5" y1="364.5" x2="1292.5" y2="364.5" stroke="#a4a4a4" stroke-width="1"  shape-rendering="crispEdges"/>
<text x="988.5" y="368.7" font-size="10.5" fill="#d8d8d8" text-anchor="end" >1,6</text>
<line x1="992.5" y1="364.5" x2="992.5" y2="368.5" stroke="#a4a4a4" stroke-width="1"  shape-rendering="crispEdges"/>
<text x="992.5" y="381" font-size="10.5" fill="#d8d8d8" text-anchor="middle" >0</text>
<line x1="1052.5" y1="364.5" x2="1052.5" y2="368.5" stroke="#a4a4a4" stroke-width="1"  shape-rendering="crispEdges"/>
<text x="1052.5" y="381" font-size="10.5" fill="#d8d8d8" text-anchor="middle" >20</text>
<line x1="1112.5" y1="364.5" x2="1112.5" y2="368.5" stroke="#a4a4a4" stroke-width="1"  shape-rendering="crispEdges"/>
<text x="1112.5" y="381" font-size="10.5" fill="#d8d8d8" text-anchor="middle" >40</text>
<line x1="1172.5" y1="364.5" x2="1172.5" y2="368.5" stroke="#a4a4a4" stroke-width="1"  shape-rendering="crispEdges"/>
<text x="1172.5" y="381" font-size="10.5" fill="#d8d8d8" text-anchor="middle" >60</text>
<line x1="1232.5" y1="364.5" x2="1232.5" y2="368.5" stroke="#a4a4a4" stroke-width="1"  shape-rendering="crispEdges"/>
<text x="1232.5" y="381" font-size="10.5" fill="#d8d8d8" text-anchor="middle" >80</text>
<line x1="1292.5" y1="364.5" x2="1292.5" y2="368.5" stroke="#a4a4a4" stroke-width="1"  shape-rendering="crispEdges"/>
<text x="1292.5" y="381" font-size="10.5" fill="#d8d8d8" text-anchor="middle" >100</text>
<line x1="992.5" y1="123.5" x2="992.5" y2="364.5" stroke="#a4a4a4" stroke-width="1"  shape-rendering="crispEdges"/>
<line x1="1292.5" y1="123.5" x2="1292.5" y2="364.5" stroke="#a4a4a4" stroke-width="1"  shape-rendering="crispEdges"/>
<line x1="992.5" y1="123.5" x2="1292.5" y2="123.5" stroke="#a4a4a4" stroke-width="1"  shape-rendering="crispEdges"/>
<polyline points="992.5,244.0 1007.5,234.7 1022.5,226.5 1037.5,227.5 1052.5,229.7 1067.5,232.6 1082.5,235.8 1097.5,238.0 1112.5,243.0 1127.5,245.6 1142.5,244.8 1157.5,233.4 1172.5,231.4 1187.5,229.5 1202.5,227.0 1217.5,227.0 1232.5,222.3 1247.5,219.9 1262.5,209.9 1277.5,198.3 1292.5,244.0" fill="none" stroke="#8c8c8c" stroke-width="2" stroke-linejoin="round"/>
<line x1="992.5" y1="243.5" x2="1292.5" y2="243.5" stroke="#e8e020" stroke-width="3"  shape-rendering="crispEdges"/>
<text x="118.3" y="411.3" font-size="22.5" fill="#f2f2f2" textLength="164.5" lengthAdjust="spacingAndGlyphs" >Avg dE2000: 0,8</text>
<text x="428.7" y="411.3" font-size="22.5" fill="#f2f2f2" textLength="145" lengthAdjust="spacingAndGlyphs" >Avg CCT: 6584</text>
<clipPath id="cpCR"><rect x="650" y="385" width="320.5" height="40"/></clipPath>
<text x="662.7" y="411.3" font-size="22.5" fill="#f2f2f2" textLength="312" lengthAdjust="spacingAndGlyphs" clip-path="url(#cpCR)">Contrast Ratio: 121233821004</text>
<text x="1014.4" y="411.3" font-size="22.5" fill="#f2f2f2" textLength="238" lengthAdjust="spacingAndGlyphs" >Average Gamma: 2,272</text>
<rect x="53.5" y="426" width="1258.5" height="99" fill="#000000" />
<rect x="138.50" y="430.5" width="47" height="77" fill="rgb(0,0,0)" stroke="#ffffff" stroke-width="1"/>
<text x="162.2" y="519" font-size="8.5" fill="#ffffff" text-anchor="middle" font-weight="bold" >0</text>
<rect x="194.50" y="430.5" width="47" height="77" fill="rgb(5,5,5)" stroke="#ffffff" stroke-width="1"/>
<text x="218.2" y="519" font-size="8.5" fill="#ffffff" text-anchor="middle" font-weight="bold" >5</text>
<rect x="249.50" y="430.5" width="47" height="77" fill="rgb(19,19,19)" stroke="#ffffff" stroke-width="1"/>
<text x="273.2" y="519" font-size="8.5" fill="#ffffff" text-anchor="middle" font-weight="bold" >10</text>
<rect x="305.50" y="430.5" width="47" height="77" fill="rgb(33,33,33)" stroke="#ffffff" stroke-width="1"/>
<text x="329.2" y="519" font-size="8.5" fill="#ffffff" text-anchor="middle" font-weight="bold" >15</text>
<rect x="360.50" y="430.5" width="47" height="77" fill="rgb(47,47,47)" stroke="#ffffff" stroke-width="1"/>
<text x="384.2" y="519" font-size="8.5" fill="#ffffff" text-anchor="middle" font-weight="bold" >20</text>
<rect x="416.50" y="430.5" width="47" height="77" fill="rgb(61,61,61)" stroke="#ffffff" stroke-width="1"/>
<text x="440.2" y="519" font-size="8.5" fill="#ffffff" text-anchor="middle" font-weight="bold" >25</text>
<rect x="471.50" y="430.5" width="47" height="77" fill="rgb(75,75,75)" stroke="#ffffff" stroke-width="1"/>
<text x="495.2" y="519" font-size="8.5" fill="#ffffff" text-anchor="middle" font-weight="bold" >30</text>
<rect x="527.50" y="430.5" width="47" height="77" fill="rgb(89,89,89)" stroke="#ffffff" stroke-width="1"/>
<text x="551.2" y="519" font-size="8.5" fill="#ffffff" text-anchor="middle" font-weight="bold" >35</text>
<rect x="583.50" y="430.5" width="47" height="77" fill="rgb(102,102,102)" stroke="#ffffff" stroke-width="1"/>
<text x="607.2" y="519" font-size="8.5" fill="#ffffff" text-anchor="middle" font-weight="bold" >40</text>
<rect x="638.50" y="430.5" width="47" height="77" fill="rgb(115,115,115)" stroke="#ffffff" stroke-width="1"/>
<text x="662.2" y="519" font-size="8.5" fill="#ffffff" text-anchor="middle" font-weight="bold" >45</text>
<rect x="694.50" y="430.5" width="47" height="77" fill="rgb(128,128,128)" stroke="#ffffff" stroke-width="1"/>
<text x="718.2" y="519" font-size="8.5" fill="#ffffff" text-anchor="middle" font-weight="bold" >50</text>
<rect x="749.50" y="430.5" width="47" height="77" fill="rgb(140,140,140)" stroke="#ffffff" stroke-width="1"/>
<text x="773.2" y="519" font-size="8.5" fill="#ffffff" text-anchor="middle" font-weight="bold" >55</text>
<rect x="805.50" y="430.5" width="47" height="77" fill="rgb(153,153,153)" stroke="#ffffff" stroke-width="1"/>
<text x="829.2" y="519" font-size="8.5" fill="#ffffff" text-anchor="middle" font-weight="bold" >60</text>
<rect x="860.50" y="430.5" width="47" height="77" fill="rgb(166,166,166)" stroke="#ffffff" stroke-width="1"/>
<text x="884.2" y="519" font-size="8.5" fill="#ffffff" text-anchor="middle" font-weight="bold" >65</text>
<rect x="916.50" y="430.5" width="47" height="77" fill="rgb(178,178,178)" stroke="#ffffff" stroke-width="1"/>
<text x="940.2" y="519" font-size="8.5" fill="#ffffff" text-anchor="middle" font-weight="bold" >70</text>
<rect x="972.50" y="430.5" width="47" height="77" fill="rgb(191,191,191)" stroke="#ffffff" stroke-width="1"/>
<text x="996.2" y="519" font-size="8.5" fill="#ffffff" text-anchor="middle" font-weight="bold" >75</text>
<rect x="1027.50" y="430.5" width="47" height="77" fill="rgb(204,204,204)" stroke="#ffffff" stroke-width="1"/>
<text x="1051.2" y="519" font-size="8.5" fill="#ffffff" text-anchor="middle" font-weight="bold" >80</text>
<rect x="1083.50" y="430.5" width="47" height="77" fill="rgb(217,217,217)" stroke="#ffffff" stroke-width="1"/>
<text x="1107.2" y="519" font-size="8.5" fill="#ffffff" text-anchor="middle" font-weight="bold" >85</text>
<rect x="1138.50" y="430.5" width="47" height="77" fill="rgb(230,230,230)" stroke="#ffffff" stroke-width="1"/>
<text x="1162.2" y="519" font-size="8.5" fill="#ffffff" text-anchor="middle" font-weight="bold" >90</text>
<rect x="1194.50" y="430.5" width="47" height="77" fill="rgb(242,242,242)" stroke="#ffffff" stroke-width="1"/>
<text x="1218.2" y="519" font-size="8.5" fill="#ffffff" text-anchor="middle" font-weight="bold" >95</text>
<rect x="1250.50" y="430.5" width="47" height="77" fill="rgb(255,255,255)" stroke="#ffffff" stroke-width="1"/>
<text x="1274.2" y="519" font-size="8.5" fill="#ffffff" text-anchor="middle" font-weight="bold" >100</text>
<text transform="translate(135.2,461) rotate(-90)" font-size="8.5" font-weight="bold" fill="#fff" textLength="26" lengthAdjust="spacingAndGlyphs">Actual</text>
<text transform="translate(135.2,503.8) rotate(-90)" font-size="8.5" font-weight="bold" fill="#fff" textLength="25.8" lengthAdjust="spacingAndGlyphs">Target</text>
<text x="68" y="575.8" font-size="21.5" fill="#f2f2f2" textLength="166.5" lengthAdjust="spacingAndGlyphs" >Current Reading</text>
<text x="69" y="607.6" font-size="18" fill="#f2f2f2" textLength="77" lengthAdjust="spacingAndGlyphs" >x: 0,3333</text>
<text x="182.4" y="607.6" font-size="18" fill="#f2f2f2" textLength="76.8" lengthAdjust="spacingAndGlyphs" >y: 0,3333</text>
<text x="69" y="633.4" font-size="18" fill="#f2f2f2" textLength="83.5" lengthAdjust="spacingAndGlyphs" >u': 0,2105</text>
<text x="182.4" y="633.4" font-size="18" fill="#f2f2f2" textLength="81.6" lengthAdjust="spacingAndGlyphs" >v': 0,4737</text>
<text x="69" y="659" font-size="18" fill="#f2f2f2" textLength="72" lengthAdjust="spacingAndGlyphs" >cd/m²: 0</text>
<text x="69" y="684.6" font-size="18" fill="#f2f2f2" textLength="90" lengthAdjust="spacingAndGlyphs" >ΔE 2000: 0</text>
<text x="410.2" y="549.6" font-size="10.5" fill="#d8d8d8" text-anchor="middle" textLength="57.5" lengthAdjust="spacingAndGlyphs" >CIE 1931 xy</text>
<rect x="328.5" y="553.5" width="190.0" height="126.0" fill="url(#gCm)" />
<rect x="328.5" y="553.5" width="190.0" height="126.0" fill="url(#gCt)" mask="url(#mTop)"/>
<rect x="328.5" y="553.5" width="190.0" height="126.0" fill="url(#gCb)" mask="url(#mBot)"/>
<rect x="328.5" y="553.5" width="190.0" height="126.0" fill="none" stroke="#8a8a8a" stroke-width="1"/>
<line x1="324.5" y1="591.5" x2="328.5" y2="591.5" stroke="#a4a4a4" stroke-width="1"  shape-rendering="crispEdges"/>
<text x="323.0" y="594.7" font-size="10.5" fill="#d8d8d8" text-anchor="end" >0,34</text>
<line x1="324.5" y1="639.5" x2="328.5" y2="639.5" stroke="#a4a4a4" stroke-width="1"  shape-rendering="crispEdges"/>
<text x="323.0" y="642.7" font-size="10.5" fill="#d8d8d8" text-anchor="end" >0,32</text>
<line x1="338.5" y1="679.5" x2="338.5" y2="683.5" stroke="#a4a4a4" stroke-width="1"  shape-rendering="crispEdges"/>
<text x="338.5" y="695.4" font-size="10.5" fill="#d8d8d8" text-anchor="middle" >0,29</text>
<line x1="375.5" y1="679.5" x2="375.5" y2="683.5" stroke="#a4a4a4" stroke-width="1"  shape-rendering="crispEdges"/>
<text x="375.5" y="695.4" font-size="10.5" fill="#d8d8d8" text-anchor="middle" >0,3</text>
<line x1="412.5" y1="679.5" x2="412.5" y2="683.5" stroke="#a4a4a4" stroke-width="1"  shape-rendering="crispEdges"/>
<text x="412.5" y="695.4" font-size="10.5" fill="#d8d8d8" text-anchor="middle" >0,31</text>
<line x1="449.5" y1="679.5" x2="449.5" y2="683.5" stroke="#a4a4a4" stroke-width="1"  shape-rendering="crispEdges"/>
<text x="449.5" y="695.4" font-size="10.5" fill="#d8d8d8" text-anchor="middle" >0,32</text>
<line x1="487.5" y1="679.5" x2="487.5" y2="683.5" stroke="#a4a4a4" stroke-width="1"  shape-rendering="crispEdges"/>
<text x="487.5" y="695.4" font-size="10.5" fill="#d8d8d8" text-anchor="middle" >0,33</text>
<clipPath id="cpCie"><rect x="328.5" y="553.5" width="190.0" height="126.0"/></clipPath>
<path d="M350 681 Q420 632 521 572" fill="none" stroke="#000" stroke-width="2.4" clip-path="url(#cpCie)"/>
<circle cx="499.6" cy="606.3" r="3" fill="rgb(0,0,0)" stroke="#111" stroke-width="1"/>
<circle cx="372.5" cy="670.8" r="3" fill="rgb(13,13,13)" stroke="#111" stroke-width="1"/>
<circle cx="408.6" cy="632.3" r="3" fill="rgb(26,26,26)" stroke="#111" stroke-width="1"/>
<circle cx="424.9" cy="626.4" r="3" fill="rgb(38,38,38)" stroke="#111" stroke-width="1"/>
<circle cx="424.2" cy="619.3" r="3" fill="rgb(51,51,51)" stroke="#111" stroke-width="1"/>
<circle cx="433.8" cy="613.9" r="3" fill="rgb(64,64,64)" stroke="#111" stroke-width="1"/>
<circle cx="428.3" cy="613.2" r="3" fill="rgb(76,76,76)" stroke="#111" stroke-width="1"/>
<circle cx="427.5" cy="615.9" r="3" fill="rgb(89,89,89)" stroke="#111" stroke-width="1"/>
<circle cx="422.7" cy="615.4" r="3" fill="rgb(102,102,102)" stroke="#111" stroke-width="1"/>
<circle cx="420.1" cy="617.8" r="3" fill="rgb(115,115,115)" stroke="#111" stroke-width="1"/>
<rect x="418.1" y="609.9" width="10" height="10" fill="none" stroke="#111" stroke-width="2.8"/>
<rect x="418.1" y="609.9" width="10" height="10" fill="none" stroke="#f4f4f4" stroke-width="1"/>
<circle cx="418.2" cy="621.0" r="3" fill="rgb(128,128,128)" stroke="#111" stroke-width="1"/>
<circle cx="419.3" cy="623.5" r="3" fill="rgb(140,140,140)" stroke="#111" stroke-width="1"/>
<circle cx="421.2" cy="623.5" r="3" fill="rgb(153,153,153)" stroke="#111" stroke-width="1"/>
<circle cx="421.9" cy="620.8" r="3" fill="rgb(166,166,166)" stroke="#111" stroke-width="1"/>
<circle cx="421.2" cy="619.8" r="3" fill="rgb(178,178,178)" stroke="#111" stroke-width="1"/>
<circle cx="420.8" cy="619.3" r="3" fill="rgb(191,191,191)" stroke="#111" stroke-width="1"/>
<circle cx="420.5" cy="618.8" r="3" fill="rgb(204,204,204)" stroke="#111" stroke-width="1"/>
<circle cx="420.1" cy="618.6" r="3" fill="rgb(217,217,217)" stroke="#111" stroke-width="1"/>
<circle cx="419.7" cy="618.3" r="3" fill="rgb(230,230,230)" stroke="#111" stroke-width="1"/>
<circle cx="419.3" cy="618.1" r="3" fill="rgb(242,242,242)" stroke="#111" stroke-width="1"/>
<circle cx="419.7" cy="618.1" r="3" fill="rgb(255,255,255)" stroke="#111" stroke-width="1"/>
<rect x="527" y="532" width="780" height="19" fill="url(#gTh)" />
<rect x="527" y="532" width="8" height="19" fill="#000" />
<clipPath id="cpTb"><rect x="527" y="530" width="780" height="175"/></clipPath>
<g clip-path="url(#cpTb)">
<text x="616.5" y="545" font-size="9.5" fill="#ffffff" font-weight="bold" textLength="4.9" lengthAdjust="spacingAndGlyphs" >0</text>
<text x="667.0" y="545" font-size="9.5" fill="#ffffff" font-weight="bold" textLength="4.9" lengthAdjust="spacingAndGlyphs" >5</text>
<text x="717.4" y="545" font-size="9.5" fill="#ffffff" font-weight="bold" textLength="9.9" lengthAdjust="spacingAndGlyphs" >10</text>
<text x="767.9" y="545" font-size="9.5" fill="#ffffff" font-weight="bold" textLength="9.9" lengthAdjust="spacingAndGlyphs" >15</text>
<text x="818.3" y="545" font-size="9.5" fill="#ffffff" font-weight="bold" textLength="9.9" lengthAdjust="spacingAndGlyphs" >20</text>
<text x="868.8" y="545" font-size="9.5" fill="#ffffff" font-weight="bold" textLength="9.9" lengthAdjust="spacingAndGlyphs" >25</text>
<text x="919.2" y="545" font-size="9.5" fill="#ffffff" font-weight="bold" textLength="9.9" lengthAdjust="spacingAndGlyphs" >30</text>
<text x="969.7" y="545" font-size="9.5" fill="#ffffff" font-weight="bold" textLength="9.9" lengthAdjust="spacingAndGlyphs" >35</text>
<text x="1020.1" y="545" font-size="9.5" fill="#ffffff" font-weight="bold" textLength="9.9" lengthAdjust="spacingAndGlyphs" >40</text>
<text x="1070.5" y="545" font-size="9.5" fill="#ffffff" font-weight="bold" textLength="9.9" lengthAdjust="spacingAndGlyphs" >45</text>
<text x="1121.0" y="545" font-size="9.5" fill="#ffffff" font-weight="bold" textLength="9.9" lengthAdjust="spacingAndGlyphs" >50</text>
<text x="1171.5" y="545" font-size="9.5" fill="#ffffff" font-weight="bold" textLength="9.9" lengthAdjust="spacingAndGlyphs" >55</text>
<text x="1221.9" y="545" font-size="9.5" fill="#ffffff" font-weight="bold" textLength="9.9" lengthAdjust="spacingAndGlyphs" >60</text>
<text x="1272.3" y="545" font-size="9.5" fill="#ffffff" font-weight="bold" textLength="9.9" lengthAdjust="spacingAndGlyphs" >65</text>
<rect x="535" y="551" width="772" height="17.9" fill="url(#gTd)" />
<rect x="527" y="551" width="8" height="17.9" fill="url(#gTs)" />
<text x="538.1" y="564.4" font-size="11" fill="#000" textLength="32.9" lengthAdjust="spacingAndGlyphs" opacity="0.45">x: CIE31</text>
<text x="537.6" y="563.6" font-size="11" fill="#ffffff" textLength="32.9" lengthAdjust="spacingAndGlyphs" >x: CIE31</text>
<text x="617.1" y="564.4" font-size="11" fill="#000" textLength="28.9" lengthAdjust="spacingAndGlyphs" opacity="0.45">0,3333</text>
<text x="616.5" y="563.6" font-size="11" fill="#ffffff" textLength="28.9" lengthAdjust="spacingAndGlyphs" >0,3333</text>
<text x="667.6" y="564.4" font-size="11" fill="#000" textLength="28.9" lengthAdjust="spacingAndGlyphs" opacity="0.45">0,2991</text>
<text x="667.0" y="563.6" font-size="11" fill="#ffffff" textLength="28.9" lengthAdjust="spacingAndGlyphs" >0,2991</text>
<text x="718.0" y="564.4" font-size="11" fill="#000" textLength="28.9" lengthAdjust="spacingAndGlyphs" opacity="0.45">0,3088</text>
<text x="717.4" y="563.6" font-size="11" fill="#ffffff" textLength="28.9" lengthAdjust="spacingAndGlyphs" >0,3088</text>
<text x="768.5" y="564.4" font-size="11" fill="#000" textLength="28.9" lengthAdjust="spacingAndGlyphs" opacity="0.45">0,3132</text>
<text x="767.9" y="563.6" font-size="11" fill="#ffffff" textLength="28.9" lengthAdjust="spacingAndGlyphs" >0,3132</text>
<text x="818.9" y="564.4" font-size="11" fill="#000" textLength="28.9" lengthAdjust="spacingAndGlyphs" opacity="0.45">0,3130</text>
<text x="818.3" y="563.6" font-size="11" fill="#ffffff" textLength="28.9" lengthAdjust="spacingAndGlyphs" >0,3130</text>
<text x="869.4" y="564.4" font-size="11" fill="#000" textLength="28.9" lengthAdjust="spacingAndGlyphs" opacity="0.45">0,3156</text>
<text x="868.8" y="563.6" font-size="11" fill="#ffffff" textLength="28.9" lengthAdjust="spacingAndGlyphs" >0,3156</text>
<text x="919.8" y="564.4" font-size="11" fill="#000" textLength="28.9" lengthAdjust="spacingAndGlyphs" opacity="0.45">0,3141</text>
<text x="919.2" y="563.6" font-size="11" fill="#ffffff" textLength="28.9" lengthAdjust="spacingAndGlyphs" >0,3141</text>
<text x="970.3" y="564.4" font-size="11" fill="#000" textLength="28.9" lengthAdjust="spacingAndGlyphs" opacity="0.45">0,3139</text>
<text x="969.7" y="563.6" font-size="11" fill="#ffffff" textLength="28.9" lengthAdjust="spacingAndGlyphs" >0,3139</text>
<text x="1020.7" y="564.4" font-size="11" fill="#000" textLength="28.9" lengthAdjust="spacingAndGlyphs" opacity="0.45">0,3126</text>
<text x="1020.1" y="563.6" font-size="11" fill="#ffffff" textLength="28.9" lengthAdjust="spacingAndGlyphs" >0,3126</text>
<text x="1071.1" y="564.4" font-size="11" fill="#000" textLength="28.9" lengthAdjust="spacingAndGlyphs" opacity="0.45">0,3119</text>
<text x="1070.5" y="563.6" font-size="11" fill="#ffffff" textLength="28.9" lengthAdjust="spacingAndGlyphs" >0,3119</text>
<text x="1121.6" y="564.4" font-size="11" fill="#000" textLength="28.9" lengthAdjust="spacingAndGlyphs" opacity="0.45">0,3114</text>
<text x="1121.0" y="563.6" font-size="11" fill="#ffffff" textLength="28.9" lengthAdjust="spacingAndGlyphs" >0,3114</text>
<text x="1172.0" y="564.4" font-size="11" fill="#000" textLength="28.9" lengthAdjust="spacingAndGlyphs" opacity="0.45">0,3117</text>
<text x="1171.5" y="563.6" font-size="11" fill="#ffffff" textLength="28.9" lengthAdjust="spacingAndGlyphs" >0,3117</text>
<text x="1222.5" y="564.4" font-size="11" fill="#000" textLength="28.9" lengthAdjust="spacingAndGlyphs" opacity="0.45">0,3122</text>
<text x="1221.9" y="563.6" font-size="11" fill="#ffffff" textLength="28.9" lengthAdjust="spacingAndGlyphs" >0,3122</text>
<text x="1272.9" y="564.4" font-size="11" fill="#000" textLength="28.9" lengthAdjust="spacingAndGlyphs" opacity="0.45">0,3124</text>
<text x="1272.3" y="563.6" font-size="11" fill="#ffffff" textLength="28.9" lengthAdjust="spacingAndGlyphs" >0,3124</text>
<rect x="535" y="568.9" width="772" height="17.1" fill="url(#gTl)" />
<rect x="527" y="568.9" width="8" height="17.1" fill="url(#gTs)" />
<text x="538.1" y="582.3" font-size="11" fill="#000" textLength="32.9" lengthAdjust="spacingAndGlyphs" opacity="0.45">y: CIE31</text>
<text x="537.6" y="581.5" font-size="11" fill="#ffffff" textLength="32.9" lengthAdjust="spacingAndGlyphs" >y: CIE31</text>
<text x="617.1" y="582.3" font-size="11" fill="#000" textLength="28.9" lengthAdjust="spacingAndGlyphs" opacity="0.45">0,3333</text>
<text x="616.5" y="581.5" font-size="11" fill="#ffffff" textLength="28.9" lengthAdjust="spacingAndGlyphs" >0,3333</text>
<text x="667.6" y="582.3" font-size="11" fill="#000" textLength="28.9" lengthAdjust="spacingAndGlyphs" opacity="0.45">0,3070</text>
<text x="667.0" y="581.5" font-size="11" fill="#ffffff" textLength="28.9" lengthAdjust="spacingAndGlyphs" >0,3070</text>
<text x="718.0" y="582.3" font-size="11" fill="#000" textLength="28.9" lengthAdjust="spacingAndGlyphs" opacity="0.45">0,3227</text>
<text x="717.4" y="581.5" font-size="11" fill="#ffffff" textLength="28.9" lengthAdjust="spacingAndGlyphs" >0,3227</text>
<text x="768.5" y="582.3" font-size="11" fill="#000" textLength="28.9" lengthAdjust="spacingAndGlyphs" opacity="0.45">0,3251</text>
<text x="767.9" y="581.5" font-size="11" fill="#ffffff" textLength="28.9" lengthAdjust="spacingAndGlyphs" >0,3251</text>
<text x="818.9" y="582.3" font-size="11" fill="#000" textLength="28.9" lengthAdjust="spacingAndGlyphs" opacity="0.45">0,3280</text>
<text x="818.3" y="581.5" font-size="11" fill="#ffffff" textLength="28.9" lengthAdjust="spacingAndGlyphs" >0,3280</text>
<text x="869.4" y="582.3" font-size="11" fill="#000" textLength="28.9" lengthAdjust="spacingAndGlyphs" opacity="0.45">0,3302</text>
<text x="868.8" y="581.5" font-size="11" fill="#ffffff" textLength="28.9" lengthAdjust="spacingAndGlyphs" >0,3302</text>
<text x="919.8" y="582.3" font-size="11" fill="#000" textLength="28.9" lengthAdjust="spacingAndGlyphs" opacity="0.45">0,3305</text>
<text x="919.2" y="581.5" font-size="11" fill="#ffffff" textLength="28.9" lengthAdjust="spacingAndGlyphs" >0,3305</text>
<text x="970.3" y="582.3" font-size="11" fill="#000" textLength="28.9" lengthAdjust="spacingAndGlyphs" opacity="0.45">0,3294</text>
<text x="969.7" y="581.5" font-size="11" fill="#ffffff" textLength="28.9" lengthAdjust="spacingAndGlyphs" >0,3294</text>
<text x="1020.7" y="582.3" font-size="11" fill="#000" textLength="28.9" lengthAdjust="spacingAndGlyphs" opacity="0.45">0,3296</text>
<text x="1020.1" y="581.5" font-size="11" fill="#ffffff" textLength="28.9" lengthAdjust="spacingAndGlyphs" >0,3296</text>
<text x="1071.1" y="582.3" font-size="11" fill="#000" textLength="28.9" lengthAdjust="spacingAndGlyphs" opacity="0.45">0,3286</text>
<text x="1070.5" y="581.5" font-size="11" fill="#ffffff" textLength="28.9" lengthAdjust="spacingAndGlyphs" >0,3286</text>
<text x="1121.6" y="582.3" font-size="11" fill="#000" textLength="28.9" lengthAdjust="spacingAndGlyphs" opacity="0.45">0,3273</text>
<text x="1121.0" y="581.5" font-size="11" fill="#ffffff" textLength="28.9" lengthAdjust="spacingAndGlyphs" >0,3273</text>
<text x="1172.0" y="582.3" font-size="11" fill="#000" textLength="28.9" lengthAdjust="spacingAndGlyphs" opacity="0.45">0,3263</text>
<text x="1171.5" y="581.5" font-size="11" fill="#ffffff" textLength="28.9" lengthAdjust="spacingAndGlyphs" >0,3263</text>
<text x="1222.5" y="582.3" font-size="11" fill="#000" textLength="28.9" lengthAdjust="spacingAndGlyphs" opacity="0.45">0,3263</text>
<text x="1221.9" y="581.5" font-size="11" fill="#ffffff" textLength="28.9" lengthAdjust="spacingAndGlyphs" >0,3263</text>
<text x="1272.9" y="582.3" font-size="11" fill="#000" textLength="28.9" lengthAdjust="spacingAndGlyphs" opacity="0.45">0,3274</text>
<text x="1272.3" y="581.5" font-size="11" fill="#ffffff" textLength="28.9" lengthAdjust="spacingAndGlyphs" >0,3274</text>
<rect x="535" y="586" width="772" height="17.7" fill="url(#gTd)" />
<rect x="527" y="586" width="8" height="17.7" fill="url(#gTs)" />
<text x="538.1" y="599.4" font-size="11" fill="#000" textLength="5.5" lengthAdjust="spacingAndGlyphs" opacity="0.45">Y</text>
<text x="537.6" y="598.6" font-size="11" fill="#ffffff" textLength="5.5" lengthAdjust="spacingAndGlyphs" >Y</text>
<text x="617.1" y="599.4" font-size="11" fill="#000" textLength="28.9" lengthAdjust="spacingAndGlyphs" opacity="0.45">0,0000</text>
<text x="616.5" y="598.6" font-size="11" fill="#ffffff" textLength="28.9" lengthAdjust="spacingAndGlyphs" >0,0000</text>
<text x="667.6" y="599.4" font-size="11" fill="#000" textLength="28.9" lengthAdjust="spacingAndGlyphs" opacity="0.45">0,1463</text>
<text x="667.0" y="598.6" font-size="11" fill="#ffffff" textLength="28.9" lengthAdjust="spacingAndGlyphs" >0,1463</text>
<text x="718.0" y="599.4" font-size="11" fill="#000" textLength="28.9" lengthAdjust="spacingAndGlyphs" opacity="0.45">0,6322</text>
<text x="717.4" y="598.6" font-size="11" fill="#ffffff" textLength="28.9" lengthAdjust="spacingAndGlyphs" >0,6322</text>
<text x="768.5" y="599.4" font-size="11" fill="#000" textLength="28.9" lengthAdjust="spacingAndGlyphs" opacity="0.45">1,6133</text>
<text x="767.9" y="598.6" font-size="11" fill="#ffffff" textLength="28.9" lengthAdjust="spacingAndGlyphs" >1,6133</text>
<text x="818.9" y="599.4" font-size="11" fill="#000" textLength="28.9" lengthAdjust="spacingAndGlyphs" opacity="0.45">3,1651</text>
<text x="818.3" y="598.6" font-size="11" fill="#ffffff" textLength="28.9" lengthAdjust="spacingAndGlyphs" >3,1651</text>
<text x="869.4" y="599.4" font-size="11" fill="#000" textLength="28.9" lengthAdjust="spacingAndGlyphs" opacity="0.45">5,3602</text>
<text x="868.8" y="598.6" font-size="11" fill="#ffffff" textLength="28.9" lengthAdjust="spacingAndGlyphs" >5,3602</text>
<text x="919.8" y="599.4" font-size="11" fill="#000" textLength="28.9" lengthAdjust="spacingAndGlyphs" opacity="0.45">8,2493</text>
<text x="919.2" y="598.6" font-size="11" fill="#ffffff" textLength="28.9" lengthAdjust="spacingAndGlyphs" >8,2493</text>
<text x="970.3" y="599.4" font-size="11" fill="#000" textLength="34.2" lengthAdjust="spacingAndGlyphs" opacity="0.45">11,7830</text>
<text x="969.7" y="598.6" font-size="11" fill="#ffffff" textLength="34.2" lengthAdjust="spacingAndGlyphs" >11,7830</text>
<text x="1020.7" y="599.4" font-size="11" fill="#000" textLength="34.2" lengthAdjust="spacingAndGlyphs" opacity="0.45">16,2408</text>
<text x="1020.1" y="598.6" font-size="11" fill="#ffffff" textLength="34.2" lengthAdjust="spacingAndGlyphs" >16,2408</text>
<text x="1071.1" y="599.4" font-size="11" fill="#000" textLength="34.2" lengthAdjust="spacingAndGlyphs" opacity="0.45">21,2677</text>
<text x="1070.5" y="598.6" font-size="11" fill="#ffffff" textLength="34.2" lengthAdjust="spacingAndGlyphs" >21,2677</text>
<text x="1121.6" y="599.4" font-size="11" fill="#000" textLength="34.2" lengthAdjust="spacingAndGlyphs" opacity="0.45">26,7254</text>
<text x="1121.0" y="598.6" font-size="11" fill="#ffffff" textLength="34.2" lengthAdjust="spacingAndGlyphs" >26,7254</text>
<text x="1172.0" y="599.4" font-size="11" fill="#000" textLength="34.2" lengthAdjust="spacingAndGlyphs" opacity="0.45">31,2582</text>
<text x="1171.5" y="598.6" font-size="11" fill="#ffffff" textLength="34.2" lengthAdjust="spacingAndGlyphs" >31,2582</text>
<text x="1222.5" y="599.4" font-size="11" fill="#000" textLength="34.2" lengthAdjust="spacingAndGlyphs" opacity="0.45">37,8946</text>
<text x="1221.9" y="598.6" font-size="11" fill="#ffffff" textLength="34.2" lengthAdjust="spacingAndGlyphs" >37,8946</text>
<text x="1272.9" y="599.4" font-size="11" fill="#000" textLength="34.2" lengthAdjust="spacingAndGlyphs" opacity="0.45">45,2995</text>
<text x="1272.3" y="598.6" font-size="11" fill="#ffffff" textLength="34.2" lengthAdjust="spacingAndGlyphs" >45,2995</text>
<rect x="535" y="603.7" width="772" height="17.6" fill="url(#gTl)" />
<rect x="527" y="603.7" width="8" height="17.6" fill="url(#gTs)" />
<text x="538.1" y="617.0999999999999" font-size="11" fill="#000" textLength="34" lengthAdjust="spacingAndGlyphs" opacity="0.45">Target Y</text>
<text x="537.6" y="616.3" font-size="11" fill="#ffffff" textLength="34" lengthAdjust="spacingAndGlyphs" >Target Y</text>
<text x="617.1" y="617.0999999999999" font-size="11" fill="#000" textLength="28.9" lengthAdjust="spacingAndGlyphs" opacity="0.45">0,0000</text>
<text x="616.5" y="616.3" font-size="11" fill="#ffffff" textLength="28.9" lengthAdjust="spacingAndGlyphs" >0,0000</text>
<text x="667.6" y="617.0999999999999" font-size="11" fill="#000" textLength="28.9" lengthAdjust="spacingAndGlyphs" opacity="0.45">0,1682</text>
<text x="667.0" y="616.3" font-size="11" fill="#ffffff" textLength="28.9" lengthAdjust="spacingAndGlyphs" >0,1682</text>
<text x="718.0" y="617.0999999999999" font-size="11" fill="#000" textLength="28.9" lengthAdjust="spacingAndGlyphs" opacity="0.45">0,7726</text>
<text x="717.4" y="616.3" font-size="11" fill="#ffffff" textLength="28.9" lengthAdjust="spacingAndGlyphs" >0,7726</text>
<text x="768.5" y="617.0999999999999" font-size="11" fill="#000" textLength="28.9" lengthAdjust="spacingAndGlyphs" opacity="0.45">1,8853</text>
<text x="767.9" y="616.3" font-size="11" fill="#ffffff" textLength="28.9" lengthAdjust="spacingAndGlyphs" >1,8853</text>
<text x="818.9" y="617.0999999999999" font-size="11" fill="#000" textLength="28.9" lengthAdjust="spacingAndGlyphs" opacity="0.45">3,5501</text>
<text x="818.3" y="616.3" font-size="11" fill="#ffffff" textLength="28.9" lengthAdjust="spacingAndGlyphs" >3,5501</text>
<text x="869.4" y="617.0999999999999" font-size="11" fill="#000" textLength="28.9" lengthAdjust="spacingAndGlyphs" opacity="0.45">5,8002</text>
<text x="868.8" y="616.3" font-size="11" fill="#ffffff" textLength="28.9" lengthAdjust="spacingAndGlyphs" >5,8002</text>
<text x="919.8" y="617.0999999999999" font-size="11" fill="#000" textLength="28.9" lengthAdjust="spacingAndGlyphs" opacity="0.45">8,6625</text>
<text x="919.2" y="616.3" font-size="11" fill="#ffffff" textLength="28.9" lengthAdjust="spacingAndGlyphs" >8,6625</text>
<text x="970.3" y="617.0999999999999" font-size="11" fill="#000" textLength="34.2" lengthAdjust="spacingAndGlyphs" opacity="0.45">12,1598</text>
<text x="969.7" y="616.3" font-size="11" fill="#ffffff" textLength="34.2" lengthAdjust="spacingAndGlyphs" >12,1598</text>
<text x="1020.7" y="617.0999999999999" font-size="11" fill="#000" textLength="34.2" lengthAdjust="spacingAndGlyphs" opacity="0.45">16,3121</text>
<text x="1020.1" y="616.3" font-size="11" fill="#ffffff" textLength="34.2" lengthAdjust="spacingAndGlyphs" >16,3121</text>
<text x="1071.1" y="617.0999999999999" font-size="11" fill="#000" textLength="34.2" lengthAdjust="spacingAndGlyphs" opacity="0.45">21,1370</text>
<text x="1070.5" y="616.3" font-size="11" fill="#ffffff" textLength="34.2" lengthAdjust="spacingAndGlyphs" >21,1370</text>
<text x="1121.6" y="617.0999999999999" font-size="11" fill="#000" textLength="34.2" lengthAdjust="spacingAndGlyphs" opacity="0.45">26,6508</text>
<text x="1121.0" y="616.3" font-size="11" fill="#ffffff" textLength="34.2" lengthAdjust="spacingAndGlyphs" >26,6508</text>
<text x="1172.0" y="617.0999999999999" font-size="11" fill="#000" textLength="34.2" lengthAdjust="spacingAndGlyphs" opacity="0.45">32,2735</text>
<text x="1171.5" y="616.3" font-size="11" fill="#ffffff" textLength="34.2" lengthAdjust="spacingAndGlyphs" >32,2735</text>
<text x="1222.5" y="617.0999999999999" font-size="11" fill="#000" textLength="34.2" lengthAdjust="spacingAndGlyphs" opacity="0.45">39,1421</text>
<text x="1221.9" y="616.3" font-size="11" fill="#ffffff" textLength="34.2" lengthAdjust="spacingAndGlyphs" >39,1421</text>
<text x="1272.9" y="617.0999999999999" font-size="11" fill="#000" textLength="34.2" lengthAdjust="spacingAndGlyphs" opacity="0.45">46,7392</text>
<text x="1272.3" y="616.3" font-size="11" fill="#ffffff" textLength="34.2" lengthAdjust="spacingAndGlyphs" >46,7392</text>
<rect x="535" y="621.3" width="772" height="17.4" fill="url(#gTd)" />
<rect x="527" y="621.3" width="8" height="17.4" fill="url(#gTs)" />
<text x="538.1" y="634.6999999999999" font-size="11" fill="#000" textLength="72.4" lengthAdjust="spacingAndGlyphs" opacity="0.45">Gamma Log/Log</text>
<text x="537.6" y="633.9" font-size="11" fill="#ffffff" textLength="72.4" lengthAdjust="spacingAndGlyphs" >Gamma Log/Log</text>
<text x="617.1" y="634.6999999999999" font-size="11" fill="#000" textLength="28.9" lengthAdjust="spacingAndGlyphs" opacity="0.45">2,2000</text>
<text x="616.5" y="633.9" font-size="11" fill="#ffffff" textLength="28.9" lengthAdjust="spacingAndGlyphs" >2,2000</text>
<text x="667.6" y="634.6999999999999" font-size="11" fill="#000" textLength="28.9" lengthAdjust="spacingAndGlyphs" opacity="0.45">2,2466</text>
<text x="667.0" y="633.9" font-size="11" fill="#ffffff" textLength="28.9" lengthAdjust="spacingAndGlyphs" >2,2466</text>
<text x="718.0" y="634.6999999999999" font-size="11" fill="#000" textLength="28.9" lengthAdjust="spacingAndGlyphs" opacity="0.45">2,2873</text>
<text x="717.4" y="633.9" font-size="11" fill="#ffffff" textLength="28.9" lengthAdjust="spacingAndGlyphs" >2,2873</text>
<text x="768.5" y="634.6999999999999" font-size="11" fill="#000" textLength="28.9" lengthAdjust="spacingAndGlyphs" opacity="0.45">2,2823</text>
<text x="767.9" y="633.9" font-size="11" fill="#ffffff" textLength="28.9" lengthAdjust="spacingAndGlyphs" >2,2823</text>
<text x="818.9" y="634.6999999999999" font-size="11" fill="#000" textLength="28.9" lengthAdjust="spacingAndGlyphs" opacity="0.45">2,2715</text>
<text x="818.3" y="633.9" font-size="11" fill="#ffffff" textLength="28.9" lengthAdjust="spacingAndGlyphs" >2,2715</text>
<text x="869.4" y="634.6999999999999" font-size="11" fill="#000" textLength="28.9" lengthAdjust="spacingAndGlyphs" opacity="0.45">2,2571</text>
<text x="868.8" y="633.9" font-size="11" fill="#ffffff" textLength="28.9" lengthAdjust="spacingAndGlyphs" >2,2571</text>
<text x="919.8" y="634.6999999999999" font-size="11" fill="#000" textLength="28.9" lengthAdjust="spacingAndGlyphs" opacity="0.45">2,2408</text>
<text x="919.2" y="633.9" font-size="11" fill="#ffffff" textLength="28.9" lengthAdjust="spacingAndGlyphs" >2,2408</text>
<text x="970.3" y="634.6999999999999" font-size="11" fill="#000" textLength="28.9" lengthAdjust="spacingAndGlyphs" opacity="0.45">2,2301</text>
<text x="969.7" y="633.9" font-size="11" fill="#ffffff" textLength="28.9" lengthAdjust="spacingAndGlyphs" >2,2301</text>
<text x="1020.7" y="634.6999999999999" font-size="11" fill="#000" textLength="28.9" lengthAdjust="spacingAndGlyphs" opacity="0.45">2,2048</text>
<text x="1020.1" y="633.9" font-size="11" fill="#ffffff" textLength="28.9" lengthAdjust="spacingAndGlyphs" >2,2048</text>
<text x="1071.1" y="634.6999999999999" font-size="11" fill="#000" textLength="28.9" lengthAdjust="spacingAndGlyphs" opacity="0.45">2,1922</text>
<text x="1070.5" y="633.9" font-size="11" fill="#ffffff" textLength="28.9" lengthAdjust="spacingAndGlyphs" >2,1922</text>
<text x="1121.6" y="634.6999999999999" font-size="11" fill="#000" textLength="28.9" lengthAdjust="spacingAndGlyphs" opacity="0.45">2,1959</text>
<text x="1121.0" y="633.9" font-size="11" fill="#ffffff" textLength="28.9" lengthAdjust="spacingAndGlyphs" >2,1959</text>
<text x="1172.0" y="634.6999999999999" font-size="11" fill="#000" textLength="28.9" lengthAdjust="spacingAndGlyphs" opacity="0.45">2,2531</text>
<text x="1171.5" y="633.9" font-size="11" fill="#ffffff" textLength="28.9" lengthAdjust="spacingAndGlyphs" >2,2531</text>
<text x="1222.5" y="634.6999999999999" font-size="11" fill="#000" textLength="28.9" lengthAdjust="spacingAndGlyphs" opacity="0.45">2,2630</text>
<text x="1221.9" y="633.9" font-size="11" fill="#ffffff" textLength="28.9" lengthAdjust="spacingAndGlyphs" >2,2630</text>
<text x="1272.9" y="634.6999999999999" font-size="11" fill="#000" textLength="28.9" lengthAdjust="spacingAndGlyphs" opacity="0.45">2,2722</text>
<text x="1272.3" y="633.9" font-size="11" fill="#ffffff" textLength="28.9" lengthAdjust="spacingAndGlyphs" >2,2722</text>
<rect x="535" y="638.7" width="772" height="18.1" fill="url(#gTl)" />
<rect x="527" y="638.7" width="8" height="18.1" fill="url(#gTs)" />
<text x="538.1" y="652.0999999999999" font-size="11" fill="#000" textLength="16.5" lengthAdjust="spacingAndGlyphs" opacity="0.45">CCT</text>
<text x="537.6" y="651.3" font-size="11" fill="#ffffff" textLength="16.5" lengthAdjust="spacingAndGlyphs" >CCT</text>
<text x="617.1" y="652.0999999999999" font-size="11" fill="#000" textLength="44.7" lengthAdjust="spacingAndGlyphs" opacity="0.45">5456,0000</text>
<text x="616.5" y="651.3" font-size="11" fill="#ffffff" textLength="44.7" lengthAdjust="spacingAndGlyphs" >5456,0000</text>
<text x="667.6" y="652.0999999999999" font-size="11" fill="#000" textLength="44.7" lengthAdjust="spacingAndGlyphs" opacity="0.45">7644,0000</text>
<text x="667.0" y="651.3" font-size="11" fill="#ffffff" textLength="44.7" lengthAdjust="spacingAndGlyphs" >7644,0000</text>
<text x="718.0" y="652.0999999999999" font-size="11" fill="#000" textLength="44.7" lengthAdjust="spacingAndGlyphs" opacity="0.45">6779,0000</text>
<text x="717.4" y="651.3" font-size="11" fill="#ffffff" textLength="44.7" lengthAdjust="spacingAndGlyphs" >6779,0000</text>
<text x="768.5" y="652.0999999999999" font-size="11" fill="#000" textLength="44.7" lengthAdjust="spacingAndGlyphs" opacity="0.45">6504,0000</text>
<text x="767.9" y="651.3" font-size="11" fill="#ffffff" textLength="44.7" lengthAdjust="spacingAndGlyphs" >6504,0000</text>
<text x="818.9" y="652.0999999999999" font-size="11" fill="#000" textLength="44.7" lengthAdjust="spacingAndGlyphs" opacity="0.45">6495,0000</text>
<text x="818.3" y="651.3" font-size="11" fill="#ffffff" textLength="44.7" lengthAdjust="spacingAndGlyphs" >6495,0000</text>
<text x="869.4" y="652.0999999999999" font-size="11" fill="#000" textLength="44.7" lengthAdjust="spacingAndGlyphs" opacity="0.45">6341,0000</text>
<text x="868.8" y="651.3" font-size="11" fill="#ffffff" textLength="44.7" lengthAdjust="spacingAndGlyphs" >6341,0000</text>
<text x="919.8" y="652.0999999999999" font-size="11" fill="#000" textLength="44.7" lengthAdjust="spacingAndGlyphs" opacity="0.45">6418,0000</text>
<text x="919.2" y="651.3" font-size="11" fill="#ffffff" textLength="44.7" lengthAdjust="spacingAndGlyphs" >6418,0000</text>
<text x="970.3" y="652.0999999999999" font-size="11" fill="#000" textLength="44.7" lengthAdjust="spacingAndGlyphs" opacity="0.45">6436,0000</text>
<text x="969.7" y="651.3" font-size="11" fill="#ffffff" textLength="44.7" lengthAdjust="spacingAndGlyphs" >6436,0000</text>
<text x="1020.7" y="652.0999999999999" font-size="11" fill="#000" textLength="44.7" lengthAdjust="spacingAndGlyphs" opacity="0.45">6503,0000</text>
<text x="1020.1" y="651.3" font-size="11" fill="#ffffff" textLength="44.7" lengthAdjust="spacingAndGlyphs" >6503,0000</text>
<text x="1071.1" y="652.0999999999999" font-size="11" fill="#000" textLength="44.7" lengthAdjust="spacingAndGlyphs" opacity="0.45">6552,0000</text>
<text x="1070.5" y="651.3" font-size="11" fill="#ffffff" textLength="44.7" lengthAdjust="spacingAndGlyphs" >6552,0000</text>
<text x="1121.6" y="652.0999999999999" font-size="11" fill="#000" textLength="44.7" lengthAdjust="spacingAndGlyphs" opacity="0.45">6590,0000</text>
<text x="1121.0" y="651.3" font-size="11" fill="#ffffff" textLength="44.7" lengthAdjust="spacingAndGlyphs" >6590,0000</text>
<text x="1172.0" y="652.0999999999999" font-size="11" fill="#000" textLength="44.7" lengthAdjust="spacingAndGlyphs" opacity="0.45">6580,0000</text>
<text x="1171.5" y="651.3" font-size="11" fill="#ffffff" textLength="44.7" lengthAdjust="spacingAndGlyphs" >6580,0000</text>
<text x="1222.5" y="652.0999999999999" font-size="11" fill="#000" textLength="44.7" lengthAdjust="spacingAndGlyphs" opacity="0.45">6553,0000</text>
<text x="1221.9" y="651.3" font-size="11" fill="#ffffff" textLength="44.7" lengthAdjust="spacingAndGlyphs" >6553,0000</text>
<text x="1272.9" y="652.0999999999999" font-size="11" fill="#000" textLength="44.7" lengthAdjust="spacingAndGlyphs" opacity="0.45">6535,0000</text>
<text x="1272.3" y="651.3" font-size="11" fill="#ffffff" textLength="44.7" lengthAdjust="spacingAndGlyphs" >6535,0000</text>
<rect x="535" y="656.8" width="772" height="17.1" fill="url(#gTd)" />
<rect x="527" y="656.8" width="8" height="17.1" fill="url(#gTs)" />
<text x="538.1" y="670.1999999999999" font-size="11" fill="#000" textLength="35.5" lengthAdjust="spacingAndGlyphs" opacity="0.45">ΔE 2000</text>
<text x="537.6" y="669.4" font-size="11" fill="#ffffff" textLength="35.5" lengthAdjust="spacingAndGlyphs" >ΔE 2000</text>
<text x="617.1" y="670.1999999999999" font-size="11" fill="#000" textLength="28.9" lengthAdjust="spacingAndGlyphs" opacity="0.45">0,0000</text>
<text x="616.5" y="669.4" font-size="11" fill="#ffffff" textLength="28.9" lengthAdjust="spacingAndGlyphs" >0,0000</text>
<text x="667.6" y="670.1999999999999" font-size="11" fill="#000" textLength="28.9" lengthAdjust="spacingAndGlyphs" opacity="0.45">0,3881</text>
<text x="667.0" y="669.4" font-size="11" fill="#ffffff" textLength="28.9" lengthAdjust="spacingAndGlyphs" >0,3881</text>
<text x="718.0" y="670.1999999999999" font-size="11" fill="#000" textLength="28.9" lengthAdjust="spacingAndGlyphs" opacity="0.45">0,7700</text>
<text x="717.4" y="669.4" font-size="11" fill="#ffffff" textLength="28.9" lengthAdjust="spacingAndGlyphs" >0,7700</text>
<text x="768.5" y="670.1999999999999" font-size="11" fill="#000" textLength="28.9" lengthAdjust="spacingAndGlyphs" opacity="0.45">1,2639</text>
<text x="767.9" y="669.4" font-size="11" fill="#ffffff" textLength="28.9" lengthAdjust="spacingAndGlyphs" >1,2639</text>
<text x="818.9" y="670.1999999999999" font-size="11" fill="#000" textLength="28.9" lengthAdjust="spacingAndGlyphs" opacity="0.45">0,9730</text>
<text x="818.3" y="669.4" font-size="11" fill="#ffffff" textLength="28.9" lengthAdjust="spacingAndGlyphs" >0,9730</text>
<text x="869.4" y="670.1999999999999" font-size="11" fill="#000" textLength="28.9" lengthAdjust="spacingAndGlyphs" opacity="0.45">1,0013</text>
<text x="868.8" y="669.4" font-size="11" fill="#ffffff" textLength="28.9" lengthAdjust="spacingAndGlyphs" >1,0013</text>
<text x="919.8" y="670.1999999999999" font-size="11" fill="#000" textLength="28.9" lengthAdjust="spacingAndGlyphs" opacity="0.45">0,6988</text>
<text x="919.2" y="669.4" font-size="11" fill="#ffffff" textLength="28.9" lengthAdjust="spacingAndGlyphs" >0,6988</text>
<text x="970.3" y="670.1999999999999" font-size="11" fill="#000" textLength="28.9" lengthAdjust="spacingAndGlyphs" opacity="0.45">0,5819</text>
<text x="969.7" y="669.4" font-size="11" fill="#ffffff" textLength="28.9" lengthAdjust="spacingAndGlyphs" >0,5819</text>
<text x="1020.7" y="670.1999999999999" font-size="11" fill="#000" textLength="28.9" lengthAdjust="spacingAndGlyphs" opacity="0.45">0,2837</text>
<text x="1020.1" y="669.4" font-size="11" fill="#ffffff" textLength="28.9" lengthAdjust="spacingAndGlyphs" >0,2837</text>
<text x="1071.1" y="670.1999999999999" font-size="11" fill="#000" textLength="28.9" lengthAdjust="spacingAndGlyphs" opacity="0.45">0,3000</text>
<text x="1070.5" y="669.4" font-size="11" fill="#ffffff" textLength="28.9" lengthAdjust="spacingAndGlyphs" >0,3000</text>
<text x="1121.6" y="670.1999999999999" font-size="11" fill="#000" textLength="28.9" lengthAdjust="spacingAndGlyphs" opacity="0.45">0,5733</text>
<text x="1121.0" y="669.4" font-size="11" fill="#ffffff" textLength="28.9" lengthAdjust="spacingAndGlyphs" >0,5733</text>
<text x="1172.0" y="670.1999999999999" font-size="11" fill="#000" textLength="28.9" lengthAdjust="spacingAndGlyphs" opacity="0.45">1,3203</text>
<text x="1171.5" y="669.4" font-size="11" fill="#ffffff" textLength="28.9" lengthAdjust="spacingAndGlyphs" >1,3203</text>
<text x="1222.5" y="670.1999999999999" font-size="11" fill="#000" textLength="28.9" lengthAdjust="spacingAndGlyphs" opacity="0.45">1,5253</text>
<text x="1221.9" y="669.4" font-size="11" fill="#ffffff" textLength="28.9" lengthAdjust="spacingAndGlyphs" >1,5253</text>
<text x="1272.9" y="670.1999999999999" font-size="11" fill="#000" textLength="28.9" lengthAdjust="spacingAndGlyphs" opacity="0.45">1,0724</text>
<text x="1272.3" y="669.4" font-size="11" fill="#ffffff" textLength="28.9" lengthAdjust="spacingAndGlyphs" >1,0724</text>
<rect x="535" y="673.9" width="772" height="17.5" fill="url(#gTl)" />
<rect x="527" y="673.9" width="8" height="17.5" fill="url(#gTs)" />
<text x="538.1" y="687.3" font-size="11" fill="#000" textLength="27" lengthAdjust="spacingAndGlyphs" opacity="0.45">ΔE ITP</text>
<text x="537.6" y="686.5" font-size="11" fill="#ffffff" textLength="27" lengthAdjust="spacingAndGlyphs" >ΔE ITP</text>
<text x="617.1" y="687.3" font-size="11" fill="#000" textLength="28.9" lengthAdjust="spacingAndGlyphs" opacity="0.45">0,0034</text>
<text x="616.5" y="686.5" font-size="11" fill="#ffffff" textLength="28.9" lengthAdjust="spacingAndGlyphs" >0,0034</text>
<text x="667.6" y="687.3" font-size="11" fill="#000" textLength="28.9" lengthAdjust="spacingAndGlyphs" opacity="0.45">4,0608</text>
<text x="667.0" y="686.5" font-size="11" fill="#ffffff" textLength="28.9" lengthAdjust="spacingAndGlyphs" >4,0608</text>
<text x="718.0" y="687.3" font-size="11" fill="#000" textLength="28.9" lengthAdjust="spacingAndGlyphs" opacity="0.45">6,8040</text>
<text x="717.4" y="686.5" font-size="11" fill="#ffffff" textLength="28.9" lengthAdjust="spacingAndGlyphs" >6,8040</text>
<text x="768.5" y="687.3" font-size="11" fill="#000" textLength="28.9" lengthAdjust="spacingAndGlyphs" opacity="0.45">6,5105</text>
<text x="767.9" y="686.5" font-size="11" fill="#ffffff" textLength="28.9" lengthAdjust="spacingAndGlyphs" >6,5105</text>
<text x="818.9" y="687.3" font-size="11" fill="#000" textLength="28.9" lengthAdjust="spacingAndGlyphs" opacity="0.45">5,4323</text>
<text x="818.3" y="686.5" font-size="11" fill="#ffffff" textLength="28.9" lengthAdjust="spacingAndGlyphs" >5,4323</text>
<text x="869.4" y="687.3" font-size="11" fill="#000" textLength="28.9" lengthAdjust="spacingAndGlyphs" opacity="0.45">4,2522</text>
<text x="868.8" y="686.5" font-size="11" fill="#ffffff" textLength="28.9" lengthAdjust="spacingAndGlyphs" >4,2522</text>
<text x="919.8" y="687.3" font-size="11" fill="#000" textLength="28.9" lengthAdjust="spacingAndGlyphs" opacity="0.45">2,7886</text>
<text x="919.2" y="686.5" font-size="11" fill="#ffffff" textLength="28.9" lengthAdjust="spacingAndGlyphs" >2,7886</text>
<text x="970.3" y="687.3" font-size="11" fill="#000" textLength="28.9" lengthAdjust="spacingAndGlyphs" opacity="0.45">1,9112</text>
<text x="969.7" y="686.5" font-size="11" fill="#ffffff" textLength="28.9" lengthAdjust="spacingAndGlyphs" >1,9112</text>
<text x="1020.7" y="687.3" font-size="11" fill="#000" textLength="28.9" lengthAdjust="spacingAndGlyphs" opacity="0.45">0,3676</text>
<text x="1020.1" y="686.5" font-size="11" fill="#ffffff" textLength="28.9" lengthAdjust="spacingAndGlyphs" >0,3676</text>
<text x="1071.1" y="687.3" font-size="11" fill="#000" textLength="28.9" lengthAdjust="spacingAndGlyphs" opacity="0.45">0,5654</text>
<text x="1070.5" y="686.5" font-size="11" fill="#ffffff" textLength="28.9" lengthAdjust="spacingAndGlyphs" >0,5654</text>
<text x="1121.6" y="687.3" font-size="11" fill="#000" textLength="28.9" lengthAdjust="spacingAndGlyphs" opacity="0.45">0,7485</text>
<text x="1121.0" y="686.5" font-size="11" fill="#ffffff" textLength="28.9" lengthAdjust="spacingAndGlyphs" >0,7485</text>
<text x="1172.0" y="687.3" font-size="11" fill="#000" textLength="28.9" lengthAdjust="spacingAndGlyphs" opacity="0.45">2,2516</text>
<text x="1171.5" y="686.5" font-size="11" fill="#ffffff" textLength="28.9" lengthAdjust="spacingAndGlyphs" >2,2516</text>
<text x="1222.5" y="687.3" font-size="11" fill="#000" textLength="28.9" lengthAdjust="spacingAndGlyphs" opacity="0.45">2,3347</text>
<text x="1221.9" y="686.5" font-size="11" fill="#ffffff" textLength="28.9" lengthAdjust="spacingAndGlyphs" >2,3347</text>
<text x="1272.9" y="687.3" font-size="11" fill="#000" textLength="28.9" lengthAdjust="spacingAndGlyphs" opacity="0.45">2,1721</text>
<text x="1272.3" y="686.5" font-size="11" fill="#ffffff" textLength="28.9" lengthAdjust="spacingAndGlyphs" >2,1721</text>
</g>
<rect x="535" y="691.4" width="772" height="11" fill="#686868" />
<rect x="546" y="692" width="508.5" height="10" fill="#454545" rx="4" />
<rect x="535.5" y="692" width="10" height="10" fill="#8a8a8a" rx="1.5" />
<path d="M542.5 694 L538.5 697 L542.5 700 Z" fill="#3a3a3a"/>
<rect x="1296.5" y="692" width="10" height="10" fill="#8a8a8a" rx="1.5" />
<path d="M1299.5 694 L1303.5 697 L1299.5 700 Z" fill="#3a3a3a"/>
<rect x="0" y="704.5" width="1366" height="64" fill="#2c2c2c" />
<rect x="0" y="705" width="1042" height="50" fill="#3a3a3a" />
<path d="M2 754.5 V710 Q2 706 6 706 H48 Q52 706 52 710 V754.5 Z" fill="url(#gSw)"/>
<rect x="7" y="711" width="40" height="24" fill="rgb(13,13,13)" rx="3.5" />
<rect x="7.5" y="711.5" width="39" height="23" rx="3.5" fill="none" stroke="#000" stroke-opacity="0.18"/>
<text x="27" y="750" font-size="10.5" fill="#222" text-anchor="middle" >5</text>
<path d="M54 754.5 V710 Q54 706 58 706 H100 Q104 706 104 710 V754.5 Z" fill="url(#gSw)"/>
<rect x="59" y="711" width="40" height="24" fill="rgb(26,26,26)" rx="3.5" />
<rect x="59.5" y="711.5" width="39" height="23" rx="3.5" fill="none" stroke="#000" stroke-opacity="0.18"/>
<text x="79" y="750" font-size="10.5" fill="#222" text-anchor="middle" >10</text>
<path d="M106 754.5 V710 Q106 706 110 706 H152 Q156 706 156 710 V754.5 Z" fill="url(#gSw)"/>
<rect x="111" y="711" width="40" height="24" fill="rgb(38,38,38)" rx="3.5" />
<rect x="111.5" y="711.5" width="39" height="23" rx="3.5" fill="none" stroke="#000" stroke-opacity="0.18"/>
<text x="131" y="750" font-size="10.5" fill="#222" text-anchor="middle" >15</text>
<path d="M158 754.5 V710 Q158 706 162 706 H204 Q208 706 208 710 V754.5 Z" fill="url(#gSw)"/>
<rect x="163" y="711" width="40" height="24" fill="rgb(51,51,51)" rx="3.5" />
<rect x="163.5" y="711.5" width="39" height="23" rx="3.5" fill="none" stroke="#000" stroke-opacity="0.18"/>
<text x="183" y="750" font-size="10.5" fill="#222" text-anchor="middle" >20</text>
<path d="M210 754.5 V710 Q210 706 214 706 H256 Q260 706 260 710 V754.5 Z" fill="url(#gSw)"/>
<rect x="215" y="711" width="40" height="24" fill="rgb(64,64,64)" rx="3.5" />
<rect x="215.5" y="711.5" width="39" height="23" rx="3.5" fill="none" stroke="#000" stroke-opacity="0.18"/>
<text x="235" y="750" font-size="10.5" fill="#222" text-anchor="middle" >25</text>
<path d="M262 754.5 V710 Q262 706 266 706 H308 Q312 706 312 710 V754.5 Z" fill="url(#gSw)"/>
<rect x="267" y="711" width="40" height="24" fill="rgb(76,76,76)" rx="3.5" />
<rect x="267.5" y="711.5" width="39" height="23" rx="3.5" fill="none" stroke="#000" stroke-opacity="0.18"/>
<text x="287" y="750" font-size="10.5" fill="#222" text-anchor="middle" >30</text>
<path d="M314 754.5 V710 Q314 706 318 706 H360 Q364 706 364 710 V754.5 Z" fill="url(#gSw)"/>
<rect x="319" y="711" width="40" height="24" fill="rgb(89,89,89)" rx="3.5" />
<rect x="319.5" y="711.5" width="39" height="23" rx="3.5" fill="none" stroke="#000" stroke-opacity="0.18"/>
<text x="339" y="750" font-size="10.5" fill="#222" text-anchor="middle" >35</text>
<path d="M366 754.5 V710 Q366 706 370 706 H412 Q416 706 416 710 V754.5 Z" fill="url(#gSw)"/>
<rect x="371" y="711" width="40" height="24" fill="rgb(102,102,102)" rx="3.5" />
<rect x="371.5" y="711.5" width="39" height="23" rx="3.5" fill="none" stroke="#000" stroke-opacity="0.18"/>
<text x="391" y="750" font-size="10.5" fill="#222" text-anchor="middle" >40</text>
<path d="M418 754.5 V710 Q418 706 422 706 H464 Q468 706 468 710 V754.5 Z" fill="url(#gSw)"/>
<rect x="423" y="711" width="40" height="24" fill="rgb(115,115,115)" rx="3.5" />
<rect x="423.5" y="711.5" width="39" height="23" rx="3.5" fill="none" stroke="#000" stroke-opacity="0.18"/>
<text x="443" y="750" font-size="10.5" fill="#222" text-anchor="middle" >45</text>
<path d="M470 754.5 V710 Q470 706 474 706 H516 Q520 706 520 710 V754.5 Z" fill="url(#gSw)"/>
<rect x="475" y="711" width="40" height="24" fill="rgb(128,128,128)" rx="3.5" />
<rect x="475.5" y="711.5" width="39" height="23" rx="3.5" fill="none" stroke="#000" stroke-opacity="0.18"/>
<text x="495" y="750" font-size="10.5" fill="#222" text-anchor="middle" >50</text>
<path d="M522 754.5 V710 Q522 706 526 706 H568 Q572 706 572 710 V754.5 Z" fill="url(#gSw)"/>
<rect x="527" y="711" width="40" height="24" fill="rgb(140,140,140)" rx="3.5" />
<rect x="527.5" y="711.5" width="39" height="23" rx="3.5" fill="none" stroke="#000" stroke-opacity="0.18"/>
<text x="547" y="750" font-size="10.5" fill="#222" text-anchor="middle" >55</text>
<path d="M574 754.5 V710 Q574 706 578 706 H620 Q624 706 624 710 V754.5 Z" fill="url(#gSw)"/>
<rect x="579" y="711" width="40" height="24" fill="rgb(153,153,153)" rx="3.5" />
<rect x="579.5" y="711.5" width="39" height="23" rx="3.5" fill="none" stroke="#000" stroke-opacity="0.18"/>
<text x="599" y="750" font-size="10.5" fill="#222" text-anchor="middle" >60</text>
<path d="M626 754.5 V710 Q626 706 630 706 H672 Q676 706 676 710 V754.5 Z" fill="url(#gSw)"/>
<rect x="631" y="711" width="40" height="24" fill="rgb(166,166,166)" rx="3.5" />
<rect x="631.5" y="711.5" width="39" height="23" rx="3.5" fill="none" stroke="#000" stroke-opacity="0.18"/>
<text x="651" y="750" font-size="10.5" fill="#222" text-anchor="middle" >65</text>
<path d="M678 754.5 V710 Q678 706 682 706 H724 Q728 706 728 710 V754.5 Z" fill="url(#gSw)"/>
<rect x="683" y="711" width="40" height="24" fill="rgb(178,178,178)" rx="3.5" />
<rect x="683.5" y="711.5" width="39" height="23" rx="3.5" fill="none" stroke="#000" stroke-opacity="0.18"/>
<text x="703" y="750" font-size="10.5" fill="#222" text-anchor="middle" >70</text>
<path d="M730 754.5 V710 Q730 706 734 706 H776 Q780 706 780 710 V754.5 Z" fill="url(#gSw)"/>
<rect x="735" y="711" width="40" height="24" fill="rgb(191,191,191)" rx="3.5" />
<rect x="735.5" y="711.5" width="39" height="23" rx="3.5" fill="none" stroke="#000" stroke-opacity="0.18"/>
<text x="755" y="750" font-size="10.5" fill="#222" text-anchor="middle" >75</text>
<path d="M782 754.5 V710 Q782 706 786 706 H828 Q832 706 832 710 V754.5 Z" fill="url(#gSw)"/>
<rect x="787" y="711" width="40" height="24" fill="rgb(204,204,204)" rx="3.5" />
<rect x="787.5" y="711.5" width="39" height="23" rx="3.5" fill="none" stroke="#000" stroke-opacity="0.18"/>
<text x="807" y="750" font-size="10.5" fill="#222" text-anchor="middle" >80</text>
<path d="M834 754.5 V710 Q834 706 838 706 H880 Q884 706 884 710 V754.5 Z" fill="url(#gSw)"/>
<rect x="839" y="711" width="40" height="24" fill="rgb(217,217,217)" rx="3.5" />
<rect x="839.5" y="711.5" width="39" height="23" rx="3.5" fill="none" stroke="#000" stroke-opacity="0.18"/>
<text x="859" y="750" font-size="10.5" fill="#222" text-anchor="middle" >85</text>
<path d="M886 754.5 V710 Q886 706 890 706 H932 Q936 706 936 710 V754.5 Z" fill="url(#gSw)"/>
<rect x="891" y="711" width="40" height="24" fill="rgb(230,230,230)" rx="3.5" />
<rect x="891.5" y="711.5" width="39" height="23" rx="3.5" fill="none" stroke="#000" stroke-opacity="0.18"/>
<text x="911" y="750" font-size="10.5" fill="#222" text-anchor="middle" >90</text>
<path d="M938 754.5 V710 Q938 706 942 706 H984 Q988 706 988 710 V754.5 Z" fill="url(#gSw)"/>
<rect x="943" y="711" width="40" height="24" fill="rgb(242,242,242)" rx="3.5" />
<rect x="943.5" y="711.5" width="39" height="23" rx="3.5" fill="none" stroke="#000" stroke-opacity="0.18"/>
<text x="963" y="750" font-size="10.5" fill="#222" text-anchor="middle" >95</text>
<path d="M990 754.5 V710 Q990 706 994 706 H1036 Q1040 706 1040 710 V754.5 Z" fill="url(#gSw)"/>
<rect x="995" y="711" width="40" height="24" fill="rgb(255,255,255)" rx="3.5" />
<rect x="995.5" y="711.5" width="39" height="23" rx="3.5" fill="none" stroke="#000" stroke-opacity="0.18"/>
<text x="1015" y="750" font-size="10.5" fill="#222" text-anchor="middle" >100</text>
<rect x="0" y="754.5" width="1042" height="11.5" fill="#6c6c6c" />
<rect x="62" y="755" width="969" height="11" fill="#444" rx="5" />
<rect x="0" y="755" width="11.5" height="11" fill="#8c8c8c" rx="1.5" />
<path d="M8.5 757 L3.5 760.5 L8.5 764 Z" fill="#3a3a3a"/>
<rect x="1030.5" y="755" width="11" height="11" fill="#8c8c8c" rx="1.5" />
<path d="M1033.5 757 L1038.5 760.5 L1033.5 764 Z" fill="#3a3a3a"/>
<path d="M1043 723.5 V710 Q1043 706 1047 706 H1087 Q1091 706 1091 710 V723.5 Z" fill="url(#gBt2)"/>
<rect x="1043" y="725" width="48" height="43" fill="url(#gBt)" />
<circle cx="1067.3" cy="714.5" r="7" fill="url(#gCtl)"/>
<path d="M1063 716.8 L1067.3 712 L1071.6 716.8 Z" fill="#2e2e2e"/>
<rect x="1052.5" y="731.5" width="28" height="28" fill="url(#gGloss)" rx="4" stroke="#242424" stroke-width="2.2" />
<rect x="1060" y="739" width="13.5" height="13" fill="#000" />
<rect x="1060" y="739" width="13.5" height="6.5" fill="#222" />
<path d="M1092.5 736 V710 Q1092.5 706 1096.5 706 H1138.0 V736 Z" fill="url(#gBt)"/>
<circle cx="1115.25" cy="721" r="9.8" fill="url(#gCtl)"/>
<rect x="1139.0" y="706" width="44.0" height="30" fill="url(#gBt)" />
<circle cx="1161.0" cy="721" r="9.8" fill="url(#gCtl)"/>
<rect x="1184.0" y="706" width="44.0" height="30" fill="url(#gBt)" />
<circle cx="1206.0" cy="721" r="9.8" fill="url(#gCtl)"/>
<rect x="1229.0" y="706" width="44.0" height="30" fill="url(#gBt)" />
<circle cx="1251.0" cy="721" r="9.8" fill="url(#gCtl)"/>
<rect x="1274.0" y="706" width="43.5" height="30" fill="url(#gBt)" />
<circle cx="1295.75" cy="721" r="9.8" fill="url(#gCtl)"/>
<rect x="1111.25" y="717" width="8" height="8" fill="#2a2a2a" />
<path d="M1157.5 716 L1166.0 721 L1157.5 726 Z" fill="#2a2a2a"/>
<path d="M1203.0 716.5 H1201.0 V726 H1203.0 M1209.0 716.5 H1211.0 V726 H1209.0" fill="none" stroke="#2a2a2a" stroke-width="2"/>
<path d="M1203.4 721 h2 M1206.6 721 h2" stroke="#2a2a2a" stroke-width="2"/>
<text x="1244.0" y="727.2" font-size="19" fill="#2a2a2a" font-weight="bold" textLength="14" lengthAdjust="spacingAndGlyphs" >∞</text>
<g transform="translate(1295.75,721)" fill="none" stroke="#2a2a2a" stroke-width="2.3"><path d="M-4.6 -1 A4.7 4.7 0 0 1 3.2 -3.4"/><path d="M4.6 1 A4.7 4.7 0 0 1 -3.2 3.4"/></g>
<path d="M1296.95 -0 " fill="none"/>
<path d="M1301.35 714.8 v5.2 h-5.2 Z" fill="#2a2a2a"/>
<path d="M1290.15 727.2 v-5.2 h5.2 Z" fill="#2a2a2a"/>
<path d="M1318.5 706 H1365 V732 Q1365 736 1361 736 H1318.5 Z" fill="url(#gLedBg)"/>
<circle cx="1341.8" cy="721" r="10" fill="url(#gLed)"/>
<path d="M1092.5 768 V741 Q1092.5 737 1096.5 737 H1228 V768 Z" fill="url(#gBt2)"/>
<path d="M1229 768 V737 H1361 Q1365 737 1365 741 V768 Z" fill="url(#gBt2)"/>
<circle cx="1123" cy="752" r="9.8" fill="url(#gCtl)"/>
<circle cx="1336" cy="752" r="9.8" fill="url(#gCtl)"/>
<path d="M1122.5 747.5 L1119 752 L1122.5 756.5 M1127 747.5 L1123.5 752 L1127 756.5" fill="none" stroke="#2e2e2e" stroke-width="1.5"/>
<path d="M1332 747.5 L1335.5 752 L1332 756.5 M1336.5 747.5 L1340 752 L1336.5 756.5" fill="none" stroke="#2e2e2e" stroke-width="1.5"/>
<text x="1149.4" y="760.6" font-size="21.5" fill="#a8a8a8" textLength="50.3" lengthAdjust="spacingAndGlyphs" stroke="#a8a8a8" stroke-width="0.7">Back</text>
<text x="1149.4" y="759.7" font-size="21.5" fill="#303030" textLength="50.3" lengthAdjust="spacingAndGlyphs" stroke="#303030" stroke-width="0.7">Back</text>
<text x="1255.8" y="760.6" font-size="21.5" fill="#a8a8a8" textLength="53" lengthAdjust="spacingAndGlyphs" stroke="#a8a8a8" stroke-width="0.7">Next</text>
<text x="1255.8" y="759.7" font-size="21.5" fill="#303030" textLength="53" lengthAdjust="spacingAndGlyphs" stroke="#303030" stroke-width="0.7">Next</text>
<rect x="0" y="766" width="1366" height="2" fill="#ffffff" />
<rect x="0" y="766" width="49" height="2" fill="#dcdcdc" />
</svg>
</body></html>
